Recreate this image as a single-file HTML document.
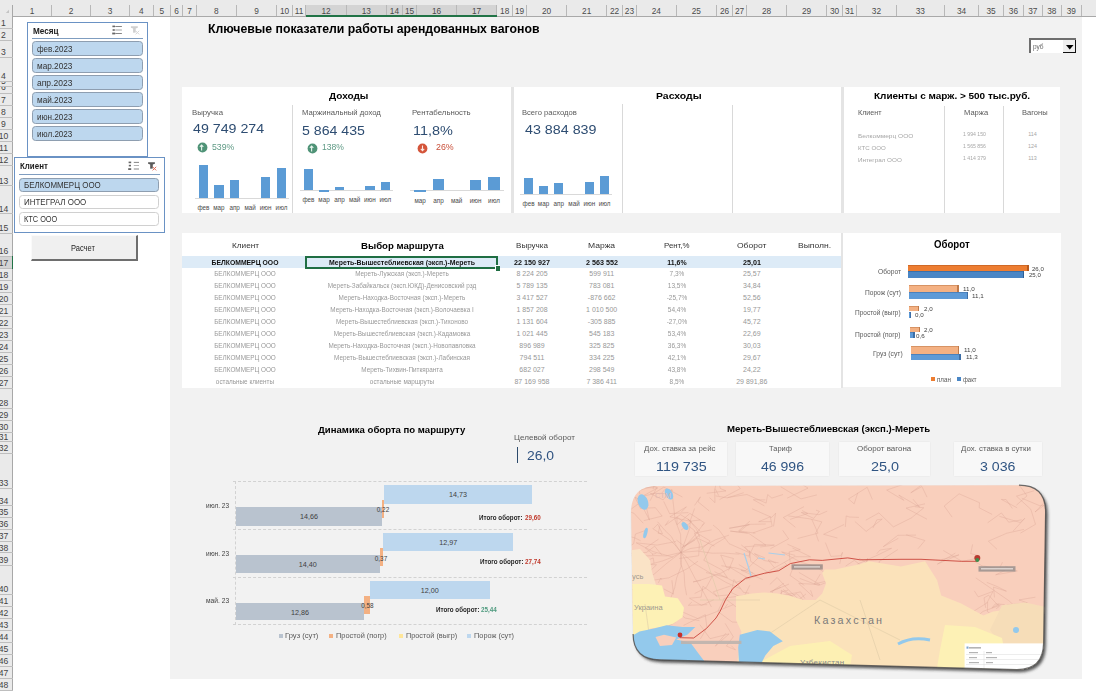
<!DOCTYPE html>
<html><head><meta charset="utf-8"><style>
html,body{margin:0;padding:0;}
body{width:1096px;height:691px;overflow:hidden;position:relative;font-family:"Liberation Sans", sans-serif;background:#fff;}
#r>div,#r>svg{position:absolute;white-space:pre;transform-origin:0 50%;}
</style></head><body><div id="r">
<div style="left:0.0px;top:0.0px;width:1096.0px;height:691.0px;background:#fff;"></div>
<div style="left:0.0px;top:0.0px;width:1096.0px;height:16.0px;background:#EAEAEA;"></div>
<div style="left:305.8px;top:4.5px;width:190.9px;height:11.5px;background:#D4D4D4;"></div>
<div style="left:51.0px;top:5.0px;width:1.0px;height:11.0px;background:#B8B8B8;"></div>
<div style="left:90.1px;top:5.0px;width:1.0px;height:11.0px;background:#B8B8B8;"></div>
<div style="left:129.1px;top:5.0px;width:1.0px;height:11.0px;background:#B8B8B8;"></div>
<div style="left:152.8px;top:5.0px;width:1.0px;height:11.0px;background:#B8B8B8;"></div>
<div style="left:170.0px;top:5.0px;width:1.0px;height:11.0px;background:#B8B8B8;"></div>
<div style="left:182.2px;top:5.0px;width:1.0px;height:11.0px;background:#B8B8B8;"></div>
<div style="left:195.9px;top:5.0px;width:1.0px;height:11.0px;background:#B8B8B8;"></div>
<div style="left:236.0px;top:5.0px;width:1.0px;height:11.0px;background:#B8B8B8;"></div>
<div style="left:276.1px;top:5.0px;width:1.0px;height:11.0px;background:#B8B8B8;"></div>
<div style="left:291.8px;top:5.0px;width:1.0px;height:11.0px;background:#B8B8B8;"></div>
<div style="left:305.3px;top:5.0px;width:1.0px;height:11.0px;background:#B8B8B8;"></div>
<div style="left:345.7px;top:5.0px;width:1.0px;height:11.0px;background:#B8B8B8;"></div>
<div style="left:385.9px;top:5.0px;width:1.0px;height:11.0px;background:#B8B8B8;"></div>
<div style="left:402.0px;top:5.0px;width:1.0px;height:11.0px;background:#B8B8B8;"></div>
<div style="left:416.0px;top:5.0px;width:1.0px;height:11.0px;background:#B8B8B8;"></div>
<div style="left:456.0px;top:5.0px;width:1.0px;height:11.0px;background:#B8B8B8;"></div>
<div style="left:496.2px;top:5.0px;width:1.0px;height:11.0px;background:#B8B8B8;"></div>
<div style="left:512.2px;top:5.0px;width:1.0px;height:11.0px;background:#B8B8B8;"></div>
<div style="left:526.0px;top:5.0px;width:1.0px;height:11.0px;background:#B8B8B8;"></div>
<div style="left:566.2px;top:5.0px;width:1.0px;height:11.0px;background:#B8B8B8;"></div>
<div style="left:606.2px;top:5.0px;width:1.0px;height:11.0px;background:#B8B8B8;"></div>
<div style="left:621.9px;top:5.0px;width:1.0px;height:11.0px;background:#B8B8B8;"></div>
<div style="left:635.9px;top:5.0px;width:1.0px;height:11.0px;background:#B8B8B8;"></div>
<div style="left:675.8px;top:5.0px;width:1.0px;height:11.0px;background:#B8B8B8;"></div>
<div style="left:715.9px;top:5.0px;width:1.0px;height:11.0px;background:#B8B8B8;"></div>
<div style="left:732.0px;top:5.0px;width:1.0px;height:11.0px;background:#B8B8B8;"></div>
<div style="left:746.0px;top:5.0px;width:1.0px;height:11.0px;background:#B8B8B8;"></div>
<div style="left:786.0px;top:5.0px;width:1.0px;height:11.0px;background:#B8B8B8;"></div>
<div style="left:826.2px;top:5.0px;width:1.0px;height:11.0px;background:#B8B8B8;"></div>
<div style="left:842.0px;top:5.0px;width:1.0px;height:11.0px;background:#B8B8B8;"></div>
<div style="left:856.0px;top:5.0px;width:1.0px;height:11.0px;background:#B8B8B8;"></div>
<div style="left:895.8px;top:5.0px;width:1.0px;height:11.0px;background:#B8B8B8;"></div>
<div style="left:943.9px;top:5.0px;width:1.0px;height:11.0px;background:#B8B8B8;"></div>
<div style="left:978.0px;top:5.0px;width:1.0px;height:11.0px;background:#B8B8B8;"></div>
<div style="left:1003.0px;top:5.0px;width:1.0px;height:11.0px;background:#B8B8B8;"></div>
<div style="left:1022.8px;top:5.0px;width:1.0px;height:11.0px;background:#B8B8B8;"></div>
<div style="left:1041.8px;top:5.0px;width:1.0px;height:11.0px;background:#B8B8B8;"></div>
<div style="left:1060.7px;top:5.0px;width:1.0px;height:11.0px;background:#B8B8B8;"></div>
<div style="left:1081.0px;top:5.0px;width:1.0px;height:11.0px;background:#B8B8B8;"></div>
<div style="left:0.0px;top:15.5px;width:1096.0px;height:1.0px;background:#A9A9A9;"></div>
<div style="left:305.8px;top:14.5px;width:190.9px;height:2.5px;background:#217346;"></div>
<svg style="position:absolute;left:0;top:0" width="13" height="16"><polygon points="9,9.8 9,13 5.8,13" fill="#C4C4C4"/></svg>
<div style="left:12.1px;top:6.3px;width:40.0px;text-align:center;font-size:8.3px;line-height:10.0px;color:#4A4A4A;">1</div>
<div style="left:51.0px;top:6.3px;width:40.0px;text-align:center;font-size:8.3px;line-height:10.0px;color:#4A4A4A;">2</div>
<div style="left:90.1px;top:6.3px;width:40.0px;text-align:center;font-size:8.3px;line-height:10.0px;color:#4A4A4A;">3</div>
<div style="left:121.4px;top:6.3px;width:40.0px;text-align:center;font-size:8.3px;line-height:10.0px;color:#4A4A4A;">4</div>
<div style="left:141.9px;top:6.3px;width:40.0px;text-align:center;font-size:8.3px;line-height:10.0px;color:#4A4A4A;">5</div>
<div style="left:156.6px;top:6.3px;width:40.0px;text-align:center;font-size:8.3px;line-height:10.0px;color:#4A4A4A;">6</div>
<div style="left:169.6px;top:6.3px;width:40.0px;text-align:center;font-size:8.3px;line-height:10.0px;color:#4A4A4A;">7</div>
<div style="left:196.4px;top:6.3px;width:40.0px;text-align:center;font-size:8.3px;line-height:10.0px;color:#4A4A4A;">8</div>
<div style="left:236.6px;top:6.3px;width:40.0px;text-align:center;font-size:8.3px;line-height:10.0px;color:#4A4A4A;">9</div>
<div style="left:264.5px;top:6.3px;width:40.0px;text-align:center;font-size:8.3px;line-height:10.0px;color:#4A4A4A;">10</div>
<div style="left:279.1px;top:6.3px;width:40.0px;text-align:center;font-size:8.3px;line-height:10.0px;color:#4A4A4A;">11</div>
<div style="left:306.0px;top:6.3px;width:40.0px;text-align:center;font-size:8.3px;line-height:10.0px;color:#4A4A4A;">12</div>
<div style="left:346.3px;top:6.3px;width:40.0px;text-align:center;font-size:8.3px;line-height:10.0px;color:#4A4A4A;">13</div>
<div style="left:374.4px;top:6.3px;width:40.0px;text-align:center;font-size:8.3px;line-height:10.0px;color:#4A4A4A;">14</div>
<div style="left:389.5px;top:6.3px;width:40.0px;text-align:center;font-size:8.3px;line-height:10.0px;color:#4A4A4A;">15</div>
<div style="left:416.5px;top:6.3px;width:40.0px;text-align:center;font-size:8.3px;line-height:10.0px;color:#4A4A4A;">16</div>
<div style="left:456.6px;top:6.3px;width:40.0px;text-align:center;font-size:8.3px;line-height:10.0px;color:#4A4A4A;">17</div>
<div style="left:484.7px;top:6.3px;width:40.0px;text-align:center;font-size:8.3px;line-height:10.0px;color:#4A4A4A;">18</div>
<div style="left:499.6px;top:6.3px;width:40.0px;text-align:center;font-size:8.3px;line-height:10.0px;color:#4A4A4A;">19</div>
<div style="left:526.6px;top:6.3px;width:40.0px;text-align:center;font-size:8.3px;line-height:10.0px;color:#4A4A4A;">20</div>
<div style="left:566.7px;top:6.3px;width:40.0px;text-align:center;font-size:8.3px;line-height:10.0px;color:#4A4A4A;">21</div>
<div style="left:594.5px;top:6.3px;width:40.0px;text-align:center;font-size:8.3px;line-height:10.0px;color:#4A4A4A;">22</div>
<div style="left:609.4px;top:6.3px;width:40.0px;text-align:center;font-size:8.3px;line-height:10.0px;color:#4A4A4A;">23</div>
<div style="left:636.3px;top:6.3px;width:40.0px;text-align:center;font-size:8.3px;line-height:10.0px;color:#4A4A4A;">24</div>
<div style="left:676.3px;top:6.3px;width:40.0px;text-align:center;font-size:8.3px;line-height:10.0px;color:#4A4A4A;">25</div>
<div style="left:704.5px;top:6.3px;width:40.0px;text-align:center;font-size:8.3px;line-height:10.0px;color:#4A4A4A;">26</div>
<div style="left:719.5px;top:6.3px;width:40.0px;text-align:center;font-size:8.3px;line-height:10.0px;color:#4A4A4A;">27</div>
<div style="left:746.5px;top:6.3px;width:40.0px;text-align:center;font-size:8.3px;line-height:10.0px;color:#4A4A4A;">28</div>
<div style="left:786.6px;top:6.3px;width:40.0px;text-align:center;font-size:8.3px;line-height:10.0px;color:#4A4A4A;">29</div>
<div style="left:814.6px;top:6.3px;width:40.0px;text-align:center;font-size:8.3px;line-height:10.0px;color:#4A4A4A;">30</div>
<div style="left:829.5px;top:6.3px;width:40.0px;text-align:center;font-size:8.3px;line-height:10.0px;color:#4A4A4A;">31</div>
<div style="left:856.4px;top:6.3px;width:40.0px;text-align:center;font-size:8.3px;line-height:10.0px;color:#4A4A4A;">32</div>
<div style="left:900.3px;top:6.3px;width:40.0px;text-align:center;font-size:8.3px;line-height:10.0px;color:#4A4A4A;">33</div>
<div style="left:941.5px;top:6.3px;width:40.0px;text-align:center;font-size:8.3px;line-height:10.0px;color:#4A4A4A;">34</div>
<div style="left:971.0px;top:6.3px;width:40.0px;text-align:center;font-size:8.3px;line-height:10.0px;color:#4A4A4A;">35</div>
<div style="left:993.4px;top:6.3px;width:40.0px;text-align:center;font-size:8.3px;line-height:10.0px;color:#4A4A4A;">36</div>
<div style="left:1012.8px;top:6.3px;width:40.0px;text-align:center;font-size:8.3px;line-height:10.0px;color:#4A4A4A;">37</div>
<div style="left:1031.8px;top:6.3px;width:40.0px;text-align:center;font-size:8.3px;line-height:10.0px;color:#4A4A4A;">38</div>
<div style="left:1051.3px;top:6.3px;width:40.0px;text-align:center;font-size:8.3px;line-height:10.0px;color:#4A4A4A;">39</div>
<div style="left:0.0px;top:16.0px;width:12.5px;height:675.0px;background:#EAEAEA;"></div>
<div style="left:12.0px;top:5.0px;width:1.2px;height:686.0px;background:#A8A8A8;"></div>
<div style="left:12.2px;top:256.0px;width:1.3px;height:12.6px;background:#217346;"></div>
<div style="left:0.0px;top:256.0px;width:12.0px;height:12.6px;background:#D4D4D4;"></div>
<div style="left:0.0px;top:28.0px;width:12.5px;height:1.0px;background:#BEBEBE;"></div>
<div style="left:-16.5px;top:17.8px;width:40.0px;text-align:center;font-size:8.6px;line-height:10.3px;color:#444;">1</div>
<div style="left:0.0px;top:39.9px;width:12.5px;height:1.0px;background:#BEBEBE;"></div>
<div style="left:-16.5px;top:30.0px;width:40.0px;text-align:center;font-size:8.6px;line-height:10.3px;color:#444;">2</div>
<div style="left:0.0px;top:56.5px;width:12.5px;height:1.0px;background:#BEBEBE;"></div>
<div style="left:-16.5px;top:46.9px;width:40.0px;text-align:center;font-size:8.6px;line-height:10.3px;color:#444;">3</div>
<div style="left:0.0px;top:80.7px;width:12.5px;height:1.0px;background:#BEBEBE;"></div>
<div style="left:-16.5px;top:71.1px;width:40.0px;text-align:center;font-size:8.6px;line-height:10.3px;color:#444;">4</div>
<div style="left:0.0px;top:86.3px;width:12.5px;height:1.0px;background:#BEBEBE;"></div>
<div style="left:0;top:81.7px;width:12px;height:4.6px;overflow:hidden;"><div style="position:absolute;left:-16.5px;width:40px;top:-5.9px;text-align:center;font-size:8.6px;line-height:10px;color:#444;">5</div></div>
<div style="left:0.0px;top:92.5px;width:12.5px;height:1.0px;background:#BEBEBE;"></div>
<div style="left:0;top:87.3px;width:12px;height:5.2px;overflow:hidden;"><div style="position:absolute;left:-16.5px;width:40px;top:-5.3px;text-align:center;font-size:8.6px;line-height:10px;color:#444;">6</div></div>
<div style="left:0.0px;top:104.7px;width:12.5px;height:1.0px;background:#BEBEBE;"></div>
<div style="left:-16.5px;top:94.6px;width:40.0px;text-align:center;font-size:8.6px;line-height:10.3px;color:#444;">7</div>
<div style="left:0.0px;top:116.8px;width:12.5px;height:1.0px;background:#BEBEBE;"></div>
<div style="left:-16.5px;top:106.8px;width:40.0px;text-align:center;font-size:8.6px;line-height:10.3px;color:#444;">8</div>
<div style="left:0.0px;top:128.8px;width:12.5px;height:1.0px;background:#BEBEBE;"></div>
<div style="left:-16.5px;top:118.8px;width:40.0px;text-align:center;font-size:8.6px;line-height:10.3px;color:#444;">9</div>
<div style="left:0.0px;top:141.3px;width:12.5px;height:1.0px;background:#BEBEBE;"></div>
<div style="left:-16.5px;top:131.1px;width:40.0px;text-align:center;font-size:8.6px;line-height:10.3px;color:#444;">10</div>
<div style="left:0.0px;top:153.2px;width:12.5px;height:1.0px;background:#BEBEBE;"></div>
<div style="left:-16.5px;top:143.3px;width:40.0px;text-align:center;font-size:8.6px;line-height:10.3px;color:#444;">11</div>
<div style="left:0.0px;top:164.8px;width:12.5px;height:1.0px;background:#BEBEBE;"></div>
<div style="left:-16.5px;top:155.0px;width:40.0px;text-align:center;font-size:8.6px;line-height:10.3px;color:#444;">12</div>
<div style="left:0.0px;top:185.3px;width:12.5px;height:1.0px;background:#BEBEBE;"></div>
<div style="left:-16.5px;top:175.7px;width:40.0px;text-align:center;font-size:8.6px;line-height:10.3px;color:#444;">13</div>
<div style="left:0.0px;top:213.1px;width:12.5px;height:1.0px;background:#BEBEBE;"></div>
<div style="left:-16.5px;top:203.5px;width:40.0px;text-align:center;font-size:8.6px;line-height:10.3px;color:#444;">14</div>
<div style="left:0.0px;top:233.0px;width:12.5px;height:1.0px;background:#BEBEBE;"></div>
<div style="left:-16.5px;top:223.4px;width:40.0px;text-align:center;font-size:8.6px;line-height:10.3px;color:#444;">15</div>
<div style="left:0.0px;top:255.5px;width:12.5px;height:1.0px;background:#BEBEBE;"></div>
<div style="left:-16.5px;top:245.9px;width:40.0px;text-align:center;font-size:8.6px;line-height:10.3px;color:#444;">16</div>
<div style="left:0.0px;top:268.1px;width:12.5px;height:1.0px;background:#BEBEBE;"></div>
<div style="left:-16.5px;top:257.8px;width:40.0px;text-align:center;font-size:8.6px;line-height:10.3px;color:#444;">17</div>
<div style="left:0.0px;top:280.2px;width:12.5px;height:1.0px;background:#BEBEBE;"></div>
<div style="left:-16.5px;top:270.2px;width:40.0px;text-align:center;font-size:8.6px;line-height:10.3px;color:#444;">18</div>
<div style="left:0.0px;top:292.0px;width:12.5px;height:1.0px;background:#BEBEBE;"></div>
<div style="left:-16.5px;top:282.1px;width:40.0px;text-align:center;font-size:8.6px;line-height:10.3px;color:#444;">19</div>
<div style="left:0.0px;top:303.8px;width:12.5px;height:1.0px;background:#BEBEBE;"></div>
<div style="left:-16.5px;top:293.9px;width:40.0px;text-align:center;font-size:8.6px;line-height:10.3px;color:#444;">20</div>
<div style="left:0.0px;top:315.8px;width:12.5px;height:1.0px;background:#BEBEBE;"></div>
<div style="left:-16.5px;top:305.8px;width:40.0px;text-align:center;font-size:8.6px;line-height:10.3px;color:#444;">21</div>
<div style="left:0.0px;top:327.6px;width:12.5px;height:1.0px;background:#BEBEBE;"></div>
<div style="left:-16.5px;top:317.7px;width:40.0px;text-align:center;font-size:8.6px;line-height:10.3px;color:#444;">22</div>
<div style="left:0.0px;top:339.8px;width:12.5px;height:1.0px;background:#BEBEBE;"></div>
<div style="left:-16.5px;top:329.7px;width:40.0px;text-align:center;font-size:8.6px;line-height:10.3px;color:#444;">23</div>
<div style="left:0.0px;top:351.9px;width:12.5px;height:1.0px;background:#BEBEBE;"></div>
<div style="left:-16.5px;top:341.9px;width:40.0px;text-align:center;font-size:8.6px;line-height:10.3px;color:#444;">24</div>
<div style="left:0.0px;top:363.7px;width:12.5px;height:1.0px;background:#BEBEBE;"></div>
<div style="left:-16.5px;top:353.8px;width:40.0px;text-align:center;font-size:8.6px;line-height:10.3px;color:#444;">25</div>
<div style="left:0.0px;top:375.7px;width:12.5px;height:1.0px;background:#BEBEBE;"></div>
<div style="left:-16.5px;top:365.7px;width:40.0px;text-align:center;font-size:8.6px;line-height:10.3px;color:#444;">26</div>
<div style="left:0.0px;top:387.5px;width:12.5px;height:1.0px;background:#BEBEBE;"></div>
<div style="left:-16.5px;top:377.6px;width:40.0px;text-align:center;font-size:8.6px;line-height:10.3px;color:#444;">27</div>
<div style="left:0.0px;top:408.0px;width:12.5px;height:1.0px;background:#BEBEBE;"></div>
<div style="left:-16.5px;top:398.4px;width:40.0px;text-align:center;font-size:8.6px;line-height:10.3px;color:#444;">28</div>
<div style="left:0.0px;top:419.9px;width:12.5px;height:1.0px;background:#BEBEBE;"></div>
<div style="left:-16.5px;top:410.0px;width:40.0px;text-align:center;font-size:8.6px;line-height:10.3px;color:#444;">29</div>
<div style="left:0.0px;top:431.5px;width:12.5px;height:1.0px;background:#BEBEBE;"></div>
<div style="left:-16.5px;top:421.7px;width:40.0px;text-align:center;font-size:8.6px;line-height:10.3px;color:#444;">30</div>
<div style="left:0.0px;top:441.3px;width:12.5px;height:1.0px;background:#BEBEBE;"></div>
<div style="left:-16.5px;top:432.4px;width:40.0px;text-align:center;font-size:8.6px;line-height:10.3px;color:#444;">31</div>
<div style="left:0.0px;top:453.0px;width:12.5px;height:1.0px;background:#BEBEBE;"></div>
<div style="left:-16.5px;top:443.2px;width:40.0px;text-align:center;font-size:8.6px;line-height:10.3px;color:#444;">32</div>
<div style="left:0.0px;top:487.8px;width:12.5px;height:1.0px;background:#BEBEBE;"></div>
<div style="left:-16.5px;top:478.2px;width:40.0px;text-align:center;font-size:8.6px;line-height:10.3px;color:#444;">33</div>
<div style="left:0.0px;top:505.1px;width:12.5px;height:1.0px;background:#BEBEBE;"></div>
<div style="left:-16.5px;top:495.5px;width:40.0px;text-align:center;font-size:8.6px;line-height:10.3px;color:#444;">34</div>
<div style="left:0.0px;top:516.8px;width:12.5px;height:1.0px;background:#BEBEBE;"></div>
<div style="left:-16.5px;top:507.0px;width:40.0px;text-align:center;font-size:8.6px;line-height:10.3px;color:#444;">35</div>
<div style="left:0.0px;top:528.9px;width:12.5px;height:1.0px;background:#BEBEBE;"></div>
<div style="left:-16.5px;top:518.9px;width:40.0px;text-align:center;font-size:8.6px;line-height:10.3px;color:#444;">36</div>
<div style="left:0.0px;top:540.5px;width:12.5px;height:1.0px;background:#BEBEBE;"></div>
<div style="left:-16.5px;top:530.7px;width:40.0px;text-align:center;font-size:8.6px;line-height:10.3px;color:#444;">37</div>
<div style="left:0.0px;top:552.4px;width:12.5px;height:1.0px;background:#BEBEBE;"></div>
<div style="left:-16.5px;top:542.5px;width:40.0px;text-align:center;font-size:8.6px;line-height:10.3px;color:#444;">38</div>
<div style="left:0.0px;top:564.5px;width:12.5px;height:1.0px;background:#BEBEBE;"></div>
<div style="left:-16.5px;top:554.5px;width:40.0px;text-align:center;font-size:8.6px;line-height:10.3px;color:#444;">39</div>
<div style="left:0.0px;top:594.0px;width:12.5px;height:1.0px;background:#BEBEBE;"></div>
<div style="left:-16.5px;top:584.4px;width:40.0px;text-align:center;font-size:8.6px;line-height:10.3px;color:#444;">40</div>
<div style="left:0.0px;top:605.6px;width:12.5px;height:1.0px;background:#BEBEBE;"></div>
<div style="left:-16.5px;top:595.8px;width:40.0px;text-align:center;font-size:8.6px;line-height:10.3px;color:#444;">41</div>
<div style="left:0.0px;top:617.5px;width:12.5px;height:1.0px;background:#BEBEBE;"></div>
<div style="left:-16.5px;top:607.6px;width:40.0px;text-align:center;font-size:8.6px;line-height:10.3px;color:#444;">42</div>
<div style="left:0.0px;top:629.5px;width:12.5px;height:1.0px;background:#BEBEBE;"></div>
<div style="left:-16.5px;top:619.5px;width:40.0px;text-align:center;font-size:8.6px;line-height:10.3px;color:#444;">43</div>
<div style="left:0.0px;top:641.8px;width:12.5px;height:1.0px;background:#BEBEBE;"></div>
<div style="left:-16.5px;top:631.7px;width:40.0px;text-align:center;font-size:8.6px;line-height:10.3px;color:#444;">44</div>
<div style="left:0.0px;top:653.9px;width:12.5px;height:1.0px;background:#BEBEBE;"></div>
<div style="left:-16.5px;top:643.9px;width:40.0px;text-align:center;font-size:8.6px;line-height:10.3px;color:#444;">45</div>
<div style="left:0.0px;top:665.9px;width:12.5px;height:1.0px;background:#BEBEBE;"></div>
<div style="left:-16.5px;top:655.9px;width:40.0px;text-align:center;font-size:8.6px;line-height:10.3px;color:#444;">46</div>
<div style="left:0.0px;top:678.0px;width:12.5px;height:1.0px;background:#BEBEBE;"></div>
<div style="left:-16.5px;top:668.0px;width:40.0px;text-align:center;font-size:8.6px;line-height:10.3px;color:#444;">47</div>
<div style="left:0.0px;top:690.0px;width:12.5px;height:1.0px;background:#BEBEBE;"></div>
<div style="left:-16.5px;top:680.0px;width:40.0px;text-align:center;font-size:8.6px;line-height:10.3px;color:#444;">48</div>
<div style="left:12.2px;top:256.0px;width:1.3px;height:12.6px;background:#217346;"></div>
<div style="left:170.0px;top:16.5px;width:912.0px;height:662.0px;background:#F2F2F2;"></div>
<div style="left:27.0px;top:22.0px;width:121.0px;height:135.0px;background:#fff;border:1px solid #6A92C4;box-sizing:border-box;"></div>
<div style="left:32.5px;top:26.3px;font-size:8.5px;line-height:10.2px;color:#1a1a1a;font-weight:bold;transform:scaleX(0.958);">Месяц</div>
<div style="left:32.0px;top:37.6px;width:111.0px;height:1.2px;background:#7F9DC0;"></div>
<svg style="left:110px;top:23px" width="16" height="14" viewBox="110 23 16 14"><g stroke="#777" stroke-width="0.9"><path d="M115.3,26.5h6.6M115.3,33.5h6.6"/><path d="M115.3,30h6.6" stroke="#999"/></g><g fill="#666"><rect x="112.4" y="25.6" width="2.6" height="1.6"/><rect x="112.6" y="29.2" width="2.2" height="1.6"/><rect x="112.2" y="32.6" width="3" height="1.8"/></g></svg>
<svg style="left:130px;top:24px" width="12" height="12" viewBox="130 24 12 12"><path d="M130.9,26.2h6.9v1.6l-2.1,0.6v4.1l-2.6,0.2v-4.3l-2.2-0.6z" fill="#cfcfcf"/><path d="M135.6,30.8l3.6,3.6M139.2,30.8l-3.6,3.6" stroke="#d8d8d8" stroke-width="1"/></svg>
<div style="left:32.1px;top:41.3px;width:110.8px;height:14.4px;background:#BDD7EE;border:1px solid #8E9EB0;border-radius:3.5px;box-sizing:border-box;"></div>
<div style="left:37.0px;top:44.5px;font-size:8.2px;line-height:9.8px;color:#333;transform:scaleX(0.980);">фев.2023</div>
<div style="left:32.1px;top:58.3px;width:110.8px;height:14.4px;background:#BDD7EE;border:1px solid #8E9EB0;border-radius:3.5px;box-sizing:border-box;"></div>
<div style="left:37.0px;top:61.5px;font-size:8.2px;line-height:9.8px;color:#333;transform:scaleX(1.005);">мар.2023</div>
<div style="left:32.1px;top:75.3px;width:110.8px;height:14.4px;background:#BDD7EE;border:1px solid #8E9EB0;border-radius:3.5px;box-sizing:border-box;"></div>
<div style="left:37.0px;top:78.5px;font-size:8.2px;line-height:9.8px;color:#333;transform:scaleX(1.040);">апр.2023</div>
<div style="left:32.1px;top:92.3px;width:110.8px;height:14.4px;background:#BDD7EE;border:1px solid #8E9EB0;border-radius:3.5px;box-sizing:border-box;"></div>
<div style="left:37.0px;top:95.5px;font-size:8.2px;line-height:9.8px;color:#333;transform:scaleX(1.004);">май.2023</div>
<div style="left:32.1px;top:109.3px;width:110.8px;height:14.4px;background:#BDD7EE;border:1px solid #8E9EB0;border-radius:3.5px;box-sizing:border-box;"></div>
<div style="left:37.0px;top:112.5px;font-size:8.2px;line-height:9.8px;color:#333;transform:scaleX(0.991);">июн.2023</div>
<div style="left:32.1px;top:126.3px;width:110.8px;height:14.4px;background:#BDD7EE;border:1px solid #8E9EB0;border-radius:3.5px;box-sizing:border-box;"></div>
<div style="left:37.0px;top:129.5px;font-size:8.2px;line-height:9.8px;color:#333;transform:scaleX(0.988);">июл.2023</div>
<div style="left:14.0px;top:157.0px;width:151.0px;height:76.0px;background:#fff;border:1px solid #6A92C4;box-sizing:border-box;"></div>
<div style="left:19.7px;top:161.2px;font-size:8.5px;line-height:10.2px;color:#1a1a1a;font-weight:bold;transform:scaleX(0.932);">Клиент</div>
<div style="left:19.0px;top:173.9px;width:141.0px;height:1.2px;background:#7F9DC0;"></div>
<svg style="left:126px;top:159px" width="16" height="14" viewBox="126 159 16 14"><g stroke="#777" stroke-width="0.9"><path d="M133.8,162.4h5.2M133.8,169h5.2"/><path d="M133.8,165.5h5.2" stroke="#aaa"/></g><g fill="#666"><rect x="128.6" y="161.6" width="2.6" height="1.6"/><rect x="128.8" y="164.8" width="2.2" height="1.6"/><rect x="128.2" y="168.2" width="3" height="1.8"/></g></svg>
<svg style="left:146px;top:160px" width="12" height="12" viewBox="146 160 12 12"><path d="M148.1,162.2h6.8v1.6l-2.1,0.6v4.1l-2.6,0.2v-4.3l-2.1-0.6z" fill="#5a5a5a"/><path d="M152.6,166.8l3.6,3.6M156.2,166.8l-3.6,3.6" stroke="#E36A55" stroke-width="1"/></svg>
<div style="left:19.2px;top:177.5px;width:139.5px;height:14.2px;background:#BDD7EE;border:1px solid #8E9EB0;border-radius:3.5px;box-sizing:border-box;"></div>
<div style="left:24.2px;top:180.6px;font-size:8.2px;line-height:9.8px;color:#333;transform:scaleX(0.968);">БЕЛКОММЕРЦ ООО</div>
<div style="left:19.2px;top:194.6px;width:139.5px;height:14.2px;background:#fff;border:1px solid #D0D0D0;border-radius:3.5px;box-sizing:border-box;"></div>
<div style="left:24.2px;top:197.7px;font-size:8.2px;line-height:9.8px;color:#333;transform:scaleX(0.973);">ИНТЕГРАЛ ООО</div>
<div style="left:19.2px;top:211.6px;width:139.5px;height:14.2px;background:#fff;border:1px solid #D0D0D0;border-radius:3.5px;box-sizing:border-box;"></div>
<div style="left:24.2px;top:214.7px;font-size:8.2px;line-height:9.8px;color:#333;transform:scaleX(0.898);">КТС ООО</div>
<div style="left:30.5px;top:235.2px;width:107.2px;height:25.5px;background:#F0F0F0;border-right:2px solid #6E6E6E;border-bottom:2px solid #6E6E6E;border-top:1px solid #fafafa;border-left:1px solid #fafafa;box-sizing:border-box;"></div>
<div style="left:71.3px;top:243.0px;font-size:8.5px;line-height:10.2px;color:#222;transform:scaleX(0.884);">Расчет</div>
<div style="left:207.9px;top:21.9px;font-size:12.4px;line-height:14.9px;color:#000;font-weight:bold;transform:scaleX(0.990);">Ключевые показатели работы арендованных вагонов</div>
<div style="left:1029.3px;top:38.3px;width:47.2px;height:15.0px;background:#fff;border-top:2px solid #6E6E6E;border-left:2px solid #6E6E6E;box-sizing:border-box;"></div>
<div style="left:1063.0px;top:40.2px;width:13.0px;height:13.1px;background:#EFEFEF;border-right:1.5px solid #111;border-bottom:1.5px solid #111;box-sizing:border-box;"></div>
<svg style="left:1065.5px;top:44.5px" width="8" height="5"><polygon points="0,0 7.5,0 3.75,4.5" fill="#000"/></svg>
<div style="left:1033.0px;top:43.1px;font-size:7px;line-height:8.4px;color:#666;transform:scaleX(0.929);">руб</div>
<div style="left:181.7px;top:87.0px;width:329.1px;height:126.2px;background:#fff;"></div>
<div style="left:510.8px;top:87.0px;width:3.0px;height:126.2px;background:#E4E4E4;"></div>
<div style="left:513.8px;top:87.0px;width:327.4px;height:126.2px;background:#fff;"></div>
<div style="left:841.2px;top:87.0px;width:2.6px;height:126.2px;background:#E4E4E4;"></div>
<div style="left:843.8px;top:87.0px;width:216.7px;height:126.2px;background:#fff;"></div>
<div style="left:292.1px;top:104.6px;width:1.0px;height:108.6px;background:#D9D9D9;"></div>
<div style="left:622.1px;top:104.2px;width:1.0px;height:109.0px;background:#D9D9D9;"></div>
<div style="left:732.3px;top:105.2px;width:1.0px;height:108.0px;background:#D9D9D9;"></div>
<div style="left:944.0px;top:105.6px;width:1.0px;height:107.6px;background:#D9D9D9;"></div>
<div style="left:1003.1px;top:105.6px;width:1.0px;height:107.6px;background:#D9D9D9;"></div>
<div style="left:328.9px;top:91.0px;font-size:9.2px;line-height:11.0px;color:#000;font-weight:bold;transform:scaleX(1.092);">Доходы</div>
<div style="left:656.1px;top:91.0px;font-size:9.2px;line-height:11.0px;color:#000;font-weight:bold;transform:scaleX(1.136);">Расходы</div>
<div style="left:874.4px;top:91.0px;font-size:9.2px;line-height:11.0px;color:#000;font-weight:bold;transform:scaleX(1.085);">Клиенты с марж. &gt; 500 тыс.руб.</div>
<div style="left:192.3px;top:109.0px;font-size:7.2px;line-height:8.6px;color:#595959;transform:scaleX(1.087);">Выручка</div>
<div style="left:301.8px;top:109.0px;font-size:7.2px;line-height:8.6px;color:#595959;transform:scaleX(1.071);">Маржинальный доход</div>
<div style="left:412.2px;top:109.0px;font-size:7.2px;line-height:8.6px;color:#595959;transform:scaleX(1.087);">Рентабельность</div>
<div style="left:522.2px;top:109.0px;font-size:7.2px;line-height:8.6px;color:#595959;transform:scaleX(1.056);">Всего расходов</div>
<div style="left:193.2px;top:120.6px;font-size:13.6px;line-height:16.3px;color:#2E4D72;transform:scaleX(1.046);">49 749 274</div>
<div style="left:301.8px;top:122.6px;font-size:13.6px;line-height:16.3px;color:#2E4D72;transform:scaleX(1.040);">5 864 435</div>
<div style="left:413.2px;top:122.5px;font-size:13.6px;line-height:16.3px;color:#2E4D72;transform:scaleX(1.063);">11,8%</div>
<div style="left:524.7px;top:121.8px;font-size:13.6px;line-height:16.3px;color:#2E4D72;transform:scaleX(1.051);">43 884 839</div>
<svg style="left:197.3px;top:142.4px" width="11" height="11" viewBox="0 0 11 11"><circle cx="5.5" cy="5.5" r="4.9" fill="#4F9377"/><path d="M4.6 8.6V3.2M2.9 4.9l1.7-1.9 1.7 1.9" stroke="#E8F5EE" stroke-width="1.1" fill="none"/></svg>
<svg style="left:307.2px;top:142.5px" width="11" height="11" viewBox="0 0 11 11"><circle cx="5.5" cy="5.5" r="4.9" fill="#4F9377"/><path d="M4.6 8.6V3.2M2.9 4.9l1.7-1.9 1.7 1.9" stroke="#E8F5EE" stroke-width="1.1" fill="none"/></svg>
<svg style="left:417.2px;top:142.5px" width="11" height="11" viewBox="0 0 11 11"><circle cx="5.5" cy="5.5" r="4.9" fill="#D4553A"/><path d="M5.5 2.4V7.6M3.8 5.9l1.7 1.9 1.7-1.9" stroke="#FBE9E4" stroke-width="1.1" fill="none"/></svg>
<div style="left:211.5px;top:141.2px;font-size:9.8px;line-height:11.8px;color:#5F9A85;transform:scaleX(0.894);">539%</div>
<div style="left:321.5px;top:141.2px;font-size:9.8px;line-height:11.8px;color:#5F9A85;transform:scaleX(0.874);">138%</div>
<div style="left:436.0px;top:141.2px;font-size:9.8px;line-height:11.8px;color:#C9503A;transform:scaleX(0.903);">26%</div>
<div style="left:195.3px;top:197.6px;width:94.2px;height:1.1px;background:#D9D9D9;"></div>
<div style="left:198.9px;top:165.1px;width:8.9px;height:33.0px;background:#5B9BD5;"></div>
<div style="left:214.1px;top:185.0px;width:9.5px;height:13.1px;background:#5B9BD5;"></div>
<div style="left:230.1px;top:179.9px;width:8.9px;height:18.2px;background:#5B9BD5;"></div>
<div style="left:261.1px;top:176.9px;width:8.7px;height:21.2px;background:#5B9BD5;"></div>
<div style="left:276.9px;top:168.0px;width:9.1px;height:30.1px;background:#5B9BD5;"></div>
<div style="left:-96.6px;top:204.3px;width:600px;text-align:center;font-size:6.3px;line-height:7.6px;color:#4A4A4A;transform:scaleX(1.000);transform-origin:50% 50%;">фев</div>
<div style="left:-81.1px;top:204.3px;width:600px;text-align:center;font-size:6.3px;line-height:7.6px;color:#4A4A4A;transform:scaleX(1.000);transform-origin:50% 50%;">мар</div>
<div style="left:-65.4px;top:204.3px;width:600px;text-align:center;font-size:6.3px;line-height:7.6px;color:#4A4A4A;transform:scaleX(1.000);transform-origin:50% 50%;">апр</div>
<div style="left:-49.8px;top:204.3px;width:600px;text-align:center;font-size:6.3px;line-height:7.6px;color:#4A4A4A;transform:scaleX(1.000);transform-origin:50% 50%;">май</div>
<div style="left:-34.5px;top:204.3px;width:600px;text-align:center;font-size:6.3px;line-height:7.6px;color:#4A4A4A;transform:scaleX(1.000);transform-origin:50% 50%;">июн</div>
<div style="left:-18.5px;top:204.3px;width:600px;text-align:center;font-size:6.3px;line-height:7.6px;color:#4A4A4A;transform:scaleX(1.000);transform-origin:50% 50%;">июл</div>
<div style="left:300.0px;top:189.5px;width:93.3px;height:1.1px;background:#D9D9D9;"></div>
<div style="left:303.8px;top:168.8px;width:9.1px;height:21.2px;background:#5B9BD5;"></div>
<div style="left:319.0px;top:190.0px;width:9.9px;height:1.6px;background:#5B9BD5;"></div>
<div style="left:335.0px;top:186.8px;width:8.9px;height:3.2px;background:#5B9BD5;"></div>
<div style="left:365.0px;top:185.8px;width:9.7px;height:4.2px;background:#5B9BD5;"></div>
<div style="left:380.8px;top:182.0px;width:9.1px;height:8.0px;background:#5B9BD5;"></div>
<div style="left:8.4px;top:196.3px;width:600px;text-align:center;font-size:6.3px;line-height:7.6px;color:#4A4A4A;transform:scaleX(1.000);transform-origin:50% 50%;">фев</div>
<div style="left:24.0px;top:196.3px;width:600px;text-align:center;font-size:6.3px;line-height:7.6px;color:#4A4A4A;transform:scaleX(1.000);transform-origin:50% 50%;">мар</div>
<div style="left:39.5px;top:196.3px;width:600px;text-align:center;font-size:6.3px;line-height:7.6px;color:#4A4A4A;transform:scaleX(1.000);transform-origin:50% 50%;">апр</div>
<div style="left:54.7px;top:196.3px;width:600px;text-align:center;font-size:6.3px;line-height:7.6px;color:#4A4A4A;transform:scaleX(1.000);transform-origin:50% 50%;">май</div>
<div style="left:69.9px;top:196.3px;width:600px;text-align:center;font-size:6.3px;line-height:7.6px;color:#4A4A4A;transform:scaleX(1.000);transform-origin:50% 50%;">июн</div>
<div style="left:85.4px;top:196.3px;width:600px;text-align:center;font-size:6.3px;line-height:7.6px;color:#4A4A4A;transform:scaleX(1.000);transform-origin:50% 50%;">июл</div>
<div style="left:410.0px;top:189.9px;width:93.7px;height:1.1px;background:#D9D9D9;"></div>
<div style="left:414.2px;top:190.4px;width:11.8px;height:1.2px;background:#5B9BD5;"></div>
<div style="left:433.0px;top:178.9px;width:11.0px;height:11.5px;background:#5B9BD5;"></div>
<div style="left:469.9px;top:179.9px;width:11.1px;height:10.5px;background:#5B9BD5;"></div>
<div style="left:488.0px;top:176.9px;width:11.9px;height:13.5px;background:#5B9BD5;"></div>
<div style="left:120.1px;top:196.5px;width:600px;text-align:center;font-size:6.3px;line-height:7.6px;color:#4A4A4A;transform:scaleX(1.000);transform-origin:50% 50%;">мар</div>
<div style="left:138.5px;top:196.5px;width:600px;text-align:center;font-size:6.3px;line-height:7.6px;color:#4A4A4A;transform:scaleX(1.000);transform-origin:50% 50%;">апр</div>
<div style="left:156.7px;top:196.5px;width:600px;text-align:center;font-size:6.3px;line-height:7.6px;color:#4A4A4A;transform:scaleX(1.000);transform-origin:50% 50%;">май</div>
<div style="left:175.5px;top:196.5px;width:600px;text-align:center;font-size:6.3px;line-height:7.6px;color:#4A4A4A;transform:scaleX(1.000);transform-origin:50% 50%;">июн</div>
<div style="left:194.0px;top:196.5px;width:600px;text-align:center;font-size:6.3px;line-height:7.6px;color:#4A4A4A;transform:scaleX(1.000);transform-origin:50% 50%;">июл</div>
<div style="left:520.2px;top:193.6px;width:92.2px;height:1.1px;background:#D9D9D9;"></div>
<div style="left:524.2px;top:178.3px;width:8.8px;height:15.8px;background:#5B9BD5;"></div>
<div style="left:539.0px;top:186.0px;width:9.0px;height:8.1px;background:#5B9BD5;"></div>
<div style="left:554.2px;top:183.0px;width:9.0px;height:11.1px;background:#5B9BD5;"></div>
<div style="left:585.0px;top:182.0px;width:8.8px;height:12.1px;background:#5B9BD5;"></div>
<div style="left:600.2px;top:175.8px;width:8.8px;height:18.3px;background:#5B9BD5;"></div>
<div style="left:228.6px;top:199.9px;width:600px;text-align:center;font-size:6.3px;line-height:7.6px;color:#4A4A4A;transform:scaleX(1.000);transform-origin:50% 50%;">фев</div>
<div style="left:243.5px;top:199.9px;width:600px;text-align:center;font-size:6.3px;line-height:7.6px;color:#4A4A4A;transform:scaleX(1.000);transform-origin:50% 50%;">мар</div>
<div style="left:258.7px;top:199.9px;width:600px;text-align:center;font-size:6.3px;line-height:7.6px;color:#4A4A4A;transform:scaleX(1.000);transform-origin:50% 50%;">апр</div>
<div style="left:274.0px;top:199.9px;width:600px;text-align:center;font-size:6.3px;line-height:7.6px;color:#4A4A4A;transform:scaleX(1.000);transform-origin:50% 50%;">май</div>
<div style="left:289.4px;top:199.9px;width:600px;text-align:center;font-size:6.3px;line-height:7.6px;color:#4A4A4A;transform:scaleX(1.000);transform-origin:50% 50%;">июн</div>
<div style="left:304.6px;top:199.9px;width:600px;text-align:center;font-size:6.3px;line-height:7.6px;color:#4A4A4A;transform:scaleX(1.000);transform-origin:50% 50%;">июл</div>
<div style="left:858.0px;top:108.7px;font-size:7.4px;line-height:8.9px;color:#595959;transform:scaleX(0.966);">Клиент</div>
<div style="left:964.2px;top:108.7px;font-size:7.4px;line-height:8.9px;color:#595959;transform:scaleX(1.025);">Маржа</div>
<div style="left:1022.2px;top:108.7px;font-size:7.4px;line-height:8.9px;color:#595959;transform:scaleX(1.021);">Вагоны</div>
<div style="left:858.0px;top:132.7px;font-size:5.6px;line-height:6.7px;color:#A6A6A6;transform:scaleX(1.173);">Белкоммерц ООО</div>
<div style="left:858.0px;top:144.7px;font-size:5.6px;line-height:6.7px;color:#A6A6A6;transform:scaleX(1.098);">КТС ООО</div>
<div style="left:858.0px;top:156.8px;font-size:5.6px;line-height:6.7px;color:#A6A6A6;transform:scaleX(1.127);">Интеграл ООО</div>
<div style="left:963.0px;top:131.1px;font-size:5.4px;line-height:6.5px;color:#A6A6A6;transform:scaleX(0.959);">1 994 150</div>
<div style="left:963.0px;top:143.2px;font-size:5.4px;line-height:6.5px;color:#A6A6A6;transform:scaleX(0.959);">1 565 856</div>
<div style="left:963.0px;top:155.2px;font-size:5.4px;line-height:6.5px;color:#A6A6A6;transform:scaleX(0.959);">1 414 379</div>
<div style="left:732.5px;top:131.1px;width:600px;text-align:center;font-size:5.4px;line-height:6.5px;color:#A6A6A6;transform:scaleX(1.000);transform-origin:50% 50%;">114</div>
<div style="left:732.5px;top:143.2px;width:600px;text-align:center;font-size:5.4px;line-height:6.5px;color:#A6A6A6;transform:scaleX(1.000);transform-origin:50% 50%;">124</div>
<div style="left:732.5px;top:155.2px;width:600px;text-align:center;font-size:5.4px;line-height:6.5px;color:#A6A6A6;transform:scaleX(1.000);transform-origin:50% 50%;">113</div>
<div style="left:182.0px;top:233.0px;width:659.2px;height:155.0px;background:#fff;"></div>
<div style="left:841.2px;top:233.0px;width:1.4px;height:155.0px;background:#E4E4E4;"></div>
<div style="left:182.0px;top:256.4px;width:659.2px;height:11.4px;background:#DDEBF7;"></div>
<div style="left:231.6px;top:241.1px;font-size:8px;line-height:9.6px;color:#333333;transform:scaleX(1.026);">Клиент</div>
<div style="left:360.7px;top:239.6px;font-size:9.5px;line-height:11.4px;color:#000;font-weight:bold;transform:scaleX(1.011);">Выбор маршрута</div>
<div style="left:516.3px;top:241.1px;font-size:8px;line-height:9.6px;color:#333333;transform:scaleX(1.008);">Выручка</div>
<div style="left:588.3px;top:241.1px;font-size:8px;line-height:9.6px;color:#333333;transform:scaleX(1.065);">Маржа</div>
<div style="left:664.0px;top:241.1px;font-size:8px;line-height:9.6px;color:#333333;transform:scaleX(0.982);">Рент,%</div>
<div style="left:737.1px;top:241.1px;font-size:8px;line-height:9.6px;color:#333333;transform:scaleX(1.064);">Оборот</div>
<div style="left:798.3px;top:241.1px;font-size:8px;line-height:9.6px;color:#333333;transform:scaleX(1.068);">Выполн.</div>
<div style="left:-55.0px;top:258.8px;width:600px;text-align:center;font-size:7.3px;line-height:8.8px;color:#111;font-weight:bold;transform:scaleX(0.934);transform-origin:50% 50%;">БЕЛКОММЕРЦ ООО</div>
<div style="left:101.6px;top:258.8px;width:600px;text-align:center;font-size:7.3px;line-height:8.8px;color:#111;font-weight:bold;transform:scaleX(0.947);transform-origin:50% 50%;">Мереть-Вышестеблиевская (эксп.)-Мереть</div>
<div style="left:232.0px;top:258.8px;width:600px;text-align:center;font-size:7.3px;line-height:8.8px;color:#111;font-weight:bold;transform:scaleX(0.983);transform-origin:50% 50%;">22 150 927</div>
<div style="left:301.7px;top:258.8px;width:600px;text-align:center;font-size:7.3px;line-height:8.8px;color:#111;font-weight:bold;transform:scaleX(0.983);transform-origin:50% 50%;">2 563 552</div>
<div style="left:376.7px;top:258.8px;width:600px;text-align:center;font-size:7.3px;line-height:8.8px;color:#111;font-weight:bold;transform:scaleX(0.950);transform-origin:50% 50%;">11,6%</div>
<div style="left:451.8px;top:258.8px;width:600px;text-align:center;font-size:7.3px;line-height:8.8px;color:#111;font-weight:bold;transform:scaleX(0.983);transform-origin:50% 50%;">25,01</div>
<div style="left:-55.0px;top:270.1px;width:600px;text-align:center;font-size:7px;line-height:8.4px;color:#989898;transform:scaleX(0.910);transform-origin:50% 50%;">БЕЛКОММЕРЦ ООО</div>
<div style="left:101.6px;top:270.1px;width:600px;text-align:center;font-size:7px;line-height:8.4px;color:#989898;transform:scaleX(0.910);transform-origin:50% 50%;">Мереть-Лужская (эксп.)-Мереть</div>
<div style="left:232.0px;top:270.1px;width:600px;text-align:center;font-size:7px;line-height:8.4px;color:#989898;transform:scaleX(1.000);transform-origin:50% 50%;">8 224 205</div>
<div style="left:301.7px;top:270.1px;width:600px;text-align:center;font-size:7px;line-height:8.4px;color:#989898;transform:scaleX(1.000);transform-origin:50% 50%;">599 911</div>
<div style="left:376.7px;top:270.1px;width:600px;text-align:center;font-size:7px;line-height:8.4px;color:#989898;transform:scaleX(0.930);transform-origin:50% 50%;">7,3%</div>
<div style="left:451.8px;top:270.1px;width:600px;text-align:center;font-size:7px;line-height:8.4px;color:#989898;transform:scaleX(1.000);transform-origin:50% 50%;">25,57</div>
<div style="left:-55.0px;top:282.1px;width:600px;text-align:center;font-size:7px;line-height:8.4px;color:#989898;transform:scaleX(0.910);transform-origin:50% 50%;">БЕЛКОММЕРЦ ООО</div>
<div style="left:101.6px;top:282.1px;width:600px;text-align:center;font-size:7px;line-height:8.4px;color:#989898;transform:scaleX(0.910);transform-origin:50% 50%;">Мереть-Забайкальск (эксп.ЮКД)-Денисовский рзд</div>
<div style="left:232.0px;top:282.1px;width:600px;text-align:center;font-size:7px;line-height:8.4px;color:#989898;transform:scaleX(1.000);transform-origin:50% 50%;">5 789 135</div>
<div style="left:301.7px;top:282.1px;width:600px;text-align:center;font-size:7px;line-height:8.4px;color:#989898;transform:scaleX(1.000);transform-origin:50% 50%;">783 081</div>
<div style="left:376.7px;top:282.1px;width:600px;text-align:center;font-size:7px;line-height:8.4px;color:#989898;transform:scaleX(0.930);transform-origin:50% 50%;">13,5%</div>
<div style="left:451.8px;top:282.1px;width:600px;text-align:center;font-size:7px;line-height:8.4px;color:#989898;transform:scaleX(1.000);transform-origin:50% 50%;">34,84</div>
<div style="left:-55.0px;top:294.0px;width:600px;text-align:center;font-size:7px;line-height:8.4px;color:#989898;transform:scaleX(0.910);transform-origin:50% 50%;">БЕЛКОММЕРЦ ООО</div>
<div style="left:101.6px;top:294.0px;width:600px;text-align:center;font-size:7px;line-height:8.4px;color:#989898;transform:scaleX(0.910);transform-origin:50% 50%;">Мереть-Находка-Восточная (эксп.)-Мереть</div>
<div style="left:232.0px;top:294.0px;width:600px;text-align:center;font-size:7px;line-height:8.4px;color:#989898;transform:scaleX(1.000);transform-origin:50% 50%;">3 417 527</div>
<div style="left:301.7px;top:294.0px;width:600px;text-align:center;font-size:7px;line-height:8.4px;color:#989898;transform:scaleX(1.000);transform-origin:50% 50%;">-876 662</div>
<div style="left:376.7px;top:294.0px;width:600px;text-align:center;font-size:7px;line-height:8.4px;color:#989898;transform:scaleX(0.930);transform-origin:50% 50%;">-25,7%</div>
<div style="left:451.8px;top:294.0px;width:600px;text-align:center;font-size:7px;line-height:8.4px;color:#989898;transform:scaleX(1.000);transform-origin:50% 50%;">52,56</div>
<div style="left:-55.0px;top:306.0px;width:600px;text-align:center;font-size:7px;line-height:8.4px;color:#989898;transform:scaleX(0.910);transform-origin:50% 50%;">БЕЛКОММЕРЦ ООО</div>
<div style="left:101.6px;top:306.0px;width:600px;text-align:center;font-size:7px;line-height:8.4px;color:#989898;transform:scaleX(0.910);transform-origin:50% 50%;">Мереть-Находка-Восточная (эксп.)-Волочаевка I</div>
<div style="left:232.0px;top:306.0px;width:600px;text-align:center;font-size:7px;line-height:8.4px;color:#989898;transform:scaleX(1.000);transform-origin:50% 50%;">1 857 208</div>
<div style="left:301.7px;top:306.0px;width:600px;text-align:center;font-size:7px;line-height:8.4px;color:#989898;transform:scaleX(1.000);transform-origin:50% 50%;">1 010 500</div>
<div style="left:376.7px;top:306.0px;width:600px;text-align:center;font-size:7px;line-height:8.4px;color:#989898;transform:scaleX(0.930);transform-origin:50% 50%;">54,4%</div>
<div style="left:451.8px;top:306.0px;width:600px;text-align:center;font-size:7px;line-height:8.4px;color:#989898;transform:scaleX(1.000);transform-origin:50% 50%;">19,77</div>
<div style="left:-55.0px;top:317.9px;width:600px;text-align:center;font-size:7px;line-height:8.4px;color:#989898;transform:scaleX(0.910);transform-origin:50% 50%;">БЕЛКОММЕРЦ ООО</div>
<div style="left:101.6px;top:317.9px;width:600px;text-align:center;font-size:7px;line-height:8.4px;color:#989898;transform:scaleX(0.910);transform-origin:50% 50%;">Мереть-Вышестеблиевская (эксп.)-Тихоново</div>
<div style="left:232.0px;top:317.9px;width:600px;text-align:center;font-size:7px;line-height:8.4px;color:#989898;transform:scaleX(1.000);transform-origin:50% 50%;">1 131 604</div>
<div style="left:301.7px;top:317.9px;width:600px;text-align:center;font-size:7px;line-height:8.4px;color:#989898;transform:scaleX(1.000);transform-origin:50% 50%;">-305 885</div>
<div style="left:376.7px;top:317.9px;width:600px;text-align:center;font-size:7px;line-height:8.4px;color:#989898;transform:scaleX(0.930);transform-origin:50% 50%;">-27,0%</div>
<div style="left:451.8px;top:317.9px;width:600px;text-align:center;font-size:7px;line-height:8.4px;color:#989898;transform:scaleX(1.000);transform-origin:50% 50%;">45,72</div>
<div style="left:-55.0px;top:329.9px;width:600px;text-align:center;font-size:7px;line-height:8.4px;color:#989898;transform:scaleX(0.910);transform-origin:50% 50%;">БЕЛКОММЕРЦ ООО</div>
<div style="left:101.6px;top:329.9px;width:600px;text-align:center;font-size:7px;line-height:8.4px;color:#989898;transform:scaleX(0.910);transform-origin:50% 50%;">Мереть-Вышестеблиевская (эксп.)-Кадамовка</div>
<div style="left:232.0px;top:329.9px;width:600px;text-align:center;font-size:7px;line-height:8.4px;color:#989898;transform:scaleX(1.000);transform-origin:50% 50%;">1 021 445</div>
<div style="left:301.7px;top:329.9px;width:600px;text-align:center;font-size:7px;line-height:8.4px;color:#989898;transform:scaleX(1.000);transform-origin:50% 50%;">545 183</div>
<div style="left:376.7px;top:329.9px;width:600px;text-align:center;font-size:7px;line-height:8.4px;color:#989898;transform:scaleX(0.930);transform-origin:50% 50%;">53,4%</div>
<div style="left:451.8px;top:329.9px;width:600px;text-align:center;font-size:7px;line-height:8.4px;color:#989898;transform:scaleX(1.000);transform-origin:50% 50%;">22,69</div>
<div style="left:-55.0px;top:341.8px;width:600px;text-align:center;font-size:7px;line-height:8.4px;color:#989898;transform:scaleX(0.910);transform-origin:50% 50%;">БЕЛКОММЕРЦ ООО</div>
<div style="left:101.6px;top:341.8px;width:600px;text-align:center;font-size:7px;line-height:8.4px;color:#989898;transform:scaleX(0.910);transform-origin:50% 50%;">Мереть-Находка-Восточная (эксп.)-Новопавловка</div>
<div style="left:232.0px;top:341.8px;width:600px;text-align:center;font-size:7px;line-height:8.4px;color:#989898;transform:scaleX(1.000);transform-origin:50% 50%;">896 989</div>
<div style="left:301.7px;top:341.8px;width:600px;text-align:center;font-size:7px;line-height:8.4px;color:#989898;transform:scaleX(1.000);transform-origin:50% 50%;">325 825</div>
<div style="left:376.7px;top:341.8px;width:600px;text-align:center;font-size:7px;line-height:8.4px;color:#989898;transform:scaleX(0.930);transform-origin:50% 50%;">36,3%</div>
<div style="left:451.8px;top:341.8px;width:600px;text-align:center;font-size:7px;line-height:8.4px;color:#989898;transform:scaleX(1.000);transform-origin:50% 50%;">30,03</div>
<div style="left:-55.0px;top:353.8px;width:600px;text-align:center;font-size:7px;line-height:8.4px;color:#989898;transform:scaleX(0.910);transform-origin:50% 50%;">БЕЛКОММЕРЦ ООО</div>
<div style="left:101.6px;top:353.8px;width:600px;text-align:center;font-size:7px;line-height:8.4px;color:#989898;transform:scaleX(0.910);transform-origin:50% 50%;">Мереть-Вышестеблиевская (эксп.)-Лабинская</div>
<div style="left:232.0px;top:353.8px;width:600px;text-align:center;font-size:7px;line-height:8.4px;color:#989898;transform:scaleX(1.000);transform-origin:50% 50%;">794 511</div>
<div style="left:301.7px;top:353.8px;width:600px;text-align:center;font-size:7px;line-height:8.4px;color:#989898;transform:scaleX(1.000);transform-origin:50% 50%;">334 225</div>
<div style="left:376.7px;top:353.8px;width:600px;text-align:center;font-size:7px;line-height:8.4px;color:#989898;transform:scaleX(0.930);transform-origin:50% 50%;">42,1%</div>
<div style="left:451.8px;top:353.8px;width:600px;text-align:center;font-size:7px;line-height:8.4px;color:#989898;transform:scaleX(1.000);transform-origin:50% 50%;">29,67</div>
<div style="left:-55.0px;top:365.7px;width:600px;text-align:center;font-size:7px;line-height:8.4px;color:#989898;transform:scaleX(0.910);transform-origin:50% 50%;">БЕЛКОММЕРЦ ООО</div>
<div style="left:101.6px;top:365.7px;width:600px;text-align:center;font-size:7px;line-height:8.4px;color:#989898;transform:scaleX(0.910);transform-origin:50% 50%;">Мереть-Тихвин-Питкяранта</div>
<div style="left:232.0px;top:365.7px;width:600px;text-align:center;font-size:7px;line-height:8.4px;color:#989898;transform:scaleX(1.000);transform-origin:50% 50%;">682 027</div>
<div style="left:301.7px;top:365.7px;width:600px;text-align:center;font-size:7px;line-height:8.4px;color:#989898;transform:scaleX(1.000);transform-origin:50% 50%;">298 549</div>
<div style="left:376.7px;top:365.7px;width:600px;text-align:center;font-size:7px;line-height:8.4px;color:#989898;transform:scaleX(0.930);transform-origin:50% 50%;">43,8%</div>
<div style="left:451.8px;top:365.7px;width:600px;text-align:center;font-size:7px;line-height:8.4px;color:#989898;transform:scaleX(1.000);transform-origin:50% 50%;">24,22</div>
<div style="left:-55.0px;top:377.7px;width:600px;text-align:center;font-size:7px;line-height:8.4px;color:#989898;transform:scaleX(0.910);transform-origin:50% 50%;">остальные клиенты</div>
<div style="left:101.6px;top:377.7px;width:600px;text-align:center;font-size:7px;line-height:8.4px;color:#989898;transform:scaleX(0.910);transform-origin:50% 50%;">остальные маршруты</div>
<div style="left:232.0px;top:377.7px;width:600px;text-align:center;font-size:7px;line-height:8.4px;color:#989898;transform:scaleX(1.000);transform-origin:50% 50%;">87 169 958</div>
<div style="left:301.7px;top:377.7px;width:600px;text-align:center;font-size:7px;line-height:8.4px;color:#989898;transform:scaleX(1.000);transform-origin:50% 50%;">7 386 411</div>
<div style="left:376.7px;top:377.7px;width:600px;text-align:center;font-size:7px;line-height:8.4px;color:#989898;transform:scaleX(0.930);transform-origin:50% 50%;">8,5%</div>
<div style="left:451.8px;top:377.7px;width:600px;text-align:center;font-size:7px;line-height:8.4px;color:#989898;transform:scaleX(1.000);transform-origin:50% 50%;">29 891,86</div>
<div style="left:305.1px;top:255.5px;width:192.9px;height:13.9px;background:transparent;border:2px solid #1F6E43;box-sizing:border-box;"></div>
<div style="left:494.6px;top:264.6px;width:5.8px;height:6.0px;background:#1F6E43;border-left:1px solid #fff;border-top:1px solid #fff;box-sizing:border-box;"></div>
<div style="left:842.6px;top:232.7px;width:218.1px;height:154.8px;background:#fff;"></div>
<div style="left:933.8px;top:239.0px;font-size:10px;line-height:12.0px;color:#000;font-weight:bold;transform:scaleX(0.964);">Оборот</div>
<div style="left:908.4px;top:264.8px;width:120.3px;height:5.9px;background:#ED7D31;"></div>
<div style="left:908.4px;top:264.8px;width:120.3px;height:0.7px;background:#B85A1E;opacity:0.55;"></div>
<div style="left:1027.3px;top:264.8px;width:1.4px;height:5.9px;background:#B85A1E;"></div>
<div style="left:908.4px;top:270.7px;width:115.6px;height:7.1px;background:#4A86C5;"></div>
<div style="left:908.4px;top:270.7px;width:115.6px;height:0.7px;background:#2E5F94;opacity:0.55;"></div>
<div style="left:1022.6px;top:270.7px;width:1.4px;height:7.1px;background:#2E5F94;"></div>
<div style="left:908.8px;top:285.4px;width:49.9px;height:6.6px;background:#F4B183;"></div>
<div style="left:908.8px;top:285.4px;width:49.9px;height:0.7px;background:#C07A4A;opacity:0.55;"></div>
<div style="left:957.3px;top:285.4px;width:1.4px;height:6.6px;background:#C07A4A;"></div>
<div style="left:908.8px;top:292.0px;width:59.4px;height:6.5px;background:#5D9AD7;"></div>
<div style="left:908.8px;top:292.0px;width:59.4px;height:0.7px;background:#3D6EA6;opacity:0.55;"></div>
<div style="left:966.8px;top:292.0px;width:1.4px;height:6.5px;background:#3D6EA6;"></div>
<div style="left:909.3px;top:305.9px;width:10.2px;height:5.6px;background:#F4B183;"></div>
<div style="left:909.3px;top:305.9px;width:10.2px;height:0.7px;background:#C07A4A;opacity:0.55;"></div>
<div style="left:918.1px;top:305.9px;width:1.4px;height:5.6px;background:#C07A4A;"></div>
<div style="left:909.3px;top:311.5px;width:1.9px;height:6.2px;background:#5D9AD7;"></div>
<div style="left:909.3px;top:311.5px;width:1.9px;height:0.7px;background:#3D6EA6;opacity:0.55;"></div>
<div style="left:909.8px;top:311.5px;width:1.4px;height:6.2px;background:#3D6EA6;"></div>
<div style="left:910.0px;top:326.5px;width:10.2px;height:5.9px;background:#F4B183;"></div>
<div style="left:910.0px;top:326.5px;width:10.2px;height:0.7px;background:#C07A4A;opacity:0.55;"></div>
<div style="left:918.8px;top:326.5px;width:1.4px;height:5.9px;background:#C07A4A;"></div>
<div style="left:910.0px;top:332.4px;width:4.8px;height:5.5px;background:#5D9AD7;"></div>
<div style="left:910.0px;top:332.4px;width:4.8px;height:0.7px;background:#3D6EA6;opacity:0.55;"></div>
<div style="left:913.4px;top:332.4px;width:1.4px;height:5.5px;background:#3D6EA6;"></div>
<div style="left:910.7px;top:346.2px;width:48.5px;height:7.6px;background:#F4B183;"></div>
<div style="left:910.7px;top:346.2px;width:48.5px;height:0.7px;background:#C07A4A;opacity:0.55;"></div>
<div style="left:957.8px;top:346.2px;width:1.4px;height:7.6px;background:#C07A4A;"></div>
<div style="left:910.7px;top:353.8px;width:49.9px;height:6.6px;background:#5D9AD7;"></div>
<div style="left:910.7px;top:353.8px;width:49.9px;height:0.7px;background:#3D6EA6;opacity:0.55;"></div>
<div style="left:959.2px;top:353.8px;width:1.4px;height:6.6px;background:#3D6EA6;"></div>
<div style="left:877.5px;top:268.4px;font-size:7.0px;line-height:8.4px;color:#595959;transform:scaleX(0.951);">Оборот</div>
<div style="left:865.0px;top:289.1px;font-size:7.0px;line-height:8.4px;color:#595959;transform:scaleX(0.944);">Порож (сут)</div>
<div style="left:855.4px;top:309.2px;font-size:7.0px;line-height:8.4px;color:#595959;transform:scaleX(0.929);">Простой (выгр)</div>
<div style="left:855.0px;top:330.5px;font-size:7.0px;line-height:8.4px;color:#595959;transform:scaleX(0.948);">Простой (погр)</div>
<div style="left:872.5px;top:350.3px;font-size:7.0px;line-height:8.4px;color:#595959;transform:scaleX(0.966);">Груз (сут)</div>
<div style="left:1032.3px;top:266.0px;font-size:5.9px;line-height:7.1px;color:#404040;transform:scaleX(1.029);">26,0</div>
<div style="left:1029.2px;top:272.4px;font-size:5.9px;line-height:7.1px;color:#404040;transform:scaleX(1.029);">25,0</div>
<div style="left:963.2px;top:286.4px;font-size:5.9px;line-height:7.1px;color:#404040;transform:scaleX(1.070);">11,0</div>
<div style="left:972.2px;top:292.8px;font-size:5.9px;line-height:7.1px;color:#404040;transform:scaleX(1.070);">11,1</div>
<div style="left:923.5px;top:306.2px;font-size:5.9px;line-height:7.1px;color:#404040;transform:scaleX(1.061);">2,0</div>
<div style="left:914.5px;top:312.2px;font-size:5.9px;line-height:7.1px;color:#404040;transform:scaleX(1.061);">0,0</div>
<div style="left:924.0px;top:327.2px;font-size:5.9px;line-height:7.1px;color:#404040;transform:scaleX(1.061);">2,0</div>
<div style="left:916.0px;top:332.5px;font-size:5.9px;line-height:7.1px;color:#404040;transform:scaleX(1.061);">0,6</div>
<div style="left:963.9px;top:347.4px;font-size:5.9px;line-height:7.1px;color:#404040;transform:scaleX(1.070);">11,0</div>
<div style="left:965.5px;top:353.8px;font-size:5.9px;line-height:7.1px;color:#404040;transform:scaleX(1.070);">11,3</div>
<div style="left:931.0px;top:377.1px;width:3.9px;height:3.8px;background:#ED7D31;"></div>
<div style="left:936.8px;top:375.7px;font-size:6.4px;line-height:7.7px;color:#595959;transform:scaleX(0.973);">план</div>
<div style="left:957.0px;top:377.1px;width:3.9px;height:3.8px;background:#4A86C5;"></div>
<div style="left:963.0px;top:375.7px;font-size:6.4px;line-height:7.7px;color:#595959;transform:scaleX(0.924);">факт</div>
<div style="left:318.3px;top:425.4px;font-size:9.2px;line-height:11.0px;color:#000;font-weight:bold;transform:scaleX(1.042);">Динамика оборта по маршруту</div>
<div style="left:513.8px;top:432.7px;font-size:7.8px;line-height:9.4px;color:#595959;transform:scaleX(1.035);">Целевой оборот</div>
<div style="left:516.8px;top:447.4px;width:1.1px;height:15.6px;background:#2C4A6B;"></div>
<div style="left:526.9px;top:448.3px;font-size:13.4px;line-height:16.1px;color:#2F5280;transform:scaleX(1.040);">26,0</div>
<div style="left:233.3px;top:480.9px;width:353.4px;height:0;border-top:1px dashed #D2D2D2;"></div>
<div style="left:233.3px;top:528.8px;width:353.4px;height:0;border-top:1px dashed #D2D2D2;"></div>
<div style="left:233.3px;top:577.1px;width:353.4px;height:0;border-top:1px dashed #D2D2D2;"></div>
<div style="left:233.3px;top:624.3px;width:353.4px;height:0;border-top:1px dashed #D2D2D2;"></div>
<div style="left:235px;top:481.4px;width:0;height:143.4px;border-left:1px dashed #D2D2D2;"></div>
<div style="left:236.0px;top:507.0px;width:146.0px;height:18.7px;background:#B9C3CF;"></div>
<div style="left:381.6px;top:500.0px;width:2.4px;height:17.8px;background:#F4B183;"></div>
<div style="left:384.0px;top:485.0px;width:148.0px;height:18.8px;background:#BDD7EE;"></div>
<div style="left:9.0px;top:513.0px;width:600px;text-align:center;font-size:7.2px;line-height:8.6px;color:#404040;transform:scaleX(1.000);transform-origin:50% 50%;">14,66</div>
<div style="left:157.9px;top:491.0px;width:600px;text-align:center;font-size:7.2px;line-height:8.6px;color:#404040;transform:scaleX(1.000);transform-origin:50% 50%;">14,73</div>
<div style="left:83.0px;top:506.4px;width:600px;text-align:center;font-size:6.4px;line-height:7.7px;color:#404040;transform:scaleX(1.000);transform-origin:50% 50%;">0,22</div>
<div style="left:479.4px;top:513.9px;font-size:6.4px;line-height:7.7px;color:#262626;font-weight:bold;transform:scaleX(0.978);">Итого оборот:</div>
<div style="left:524.7px;top:513.7px;font-size:6.6px;line-height:7.9px;color:#C0392B;font-weight:bold;transform:scaleX(0.951);">29,60</div>
<div style="left:206.0px;top:502.1px;font-size:7px;line-height:8.4px;color:#404040;transform:scaleX(0.932);">июл. 23</div>
<div style="left:236.0px;top:555.2px;width:143.9px;height:17.5px;background:#B9C3CF;"></div>
<div style="left:379.9px;top:548.1px;width:3.1px;height:17.7px;background:#F4B183;"></div>
<div style="left:383.0px;top:533.2px;width:129.9px;height:17.7px;background:#BDD7EE;"></div>
<div style="left:7.8px;top:561.0px;width:600px;text-align:center;font-size:7.2px;line-height:8.6px;color:#404040;transform:scaleX(1.000);transform-origin:50% 50%;">14,40</div>
<div style="left:148.2px;top:538.8px;width:600px;text-align:center;font-size:7.2px;line-height:8.6px;color:#404040;transform:scaleX(1.000);transform-origin:50% 50%;">12,97</div>
<div style="left:81.0px;top:554.7px;width:600px;text-align:center;font-size:6.4px;line-height:7.7px;color:#404040;transform:scaleX(1.000);transform-origin:50% 50%;">0,37</div>
<div style="left:480.0px;top:558.0px;font-size:6.4px;line-height:7.7px;color:#262626;font-weight:bold;transform:scaleX(0.978);">Итого оборот:</div>
<div style="left:525.3px;top:557.8px;font-size:6.6px;line-height:7.9px;color:#C0392B;font-weight:bold;transform:scaleX(0.951);">27,74</div>
<div style="left:206.0px;top:549.7px;font-size:7px;line-height:8.4px;color:#404040;transform:scaleX(0.935);">июн. 23</div>
<div style="left:236.0px;top:603.2px;width:127.8px;height:17.3px;background:#B9C3CF;"></div>
<div style="left:363.8px;top:595.9px;width:6.4px;height:17.9px;background:#F4B183;"></div>
<div style="left:370.2px;top:581.0px;width:119.8px;height:17.8px;background:#BDD7EE;"></div>
<div style="left:0.0px;top:609.4px;width:600px;text-align:center;font-size:7.2px;line-height:8.6px;color:#404040;transform:scaleX(1.000);transform-origin:50% 50%;">12,86</div>
<div style="left:129.7px;top:587.4px;width:600px;text-align:center;font-size:7.2px;line-height:8.6px;color:#404040;transform:scaleX(1.000);transform-origin:50% 50%;">12,00</div>
<div style="left:67.4px;top:601.8px;width:600px;text-align:center;font-size:6.4px;line-height:7.7px;color:#404040;transform:scaleX(1.000);transform-origin:50% 50%;">0,58</div>
<div style="left:435.9px;top:605.7px;font-size:6.4px;line-height:7.7px;color:#262626;font-weight:bold;transform:scaleX(0.978);">Итого оборот:</div>
<div style="left:481.2px;top:605.5px;font-size:6.6px;line-height:7.9px;color:#4E9A7E;font-weight:bold;transform:scaleX(0.951);">25,44</div>
<div style="left:206.0px;top:597.2px;font-size:7px;line-height:8.4px;color:#404040;transform:scaleX(0.951);">май. 23</div>
<div style="left:279.3px;top:633.5px;width:3.8px;height:4.5px;background:#B9C3CF;"></div>
<div style="left:284.8px;top:631.9px;font-size:7px;line-height:8.4px;color:#595959;transform:scaleX(1.087);">Груз (сут)</div>
<div style="left:329.0px;top:633.5px;width:3.8px;height:4.5px;background:#F4B183;"></div>
<div style="left:335.5px;top:631.9px;font-size:7px;line-height:8.4px;color:#595959;transform:scaleX(1.056);">Простой (погр)</div>
<div style="left:399.4px;top:633.5px;width:3.8px;height:4.5px;background:#FFE699;"></div>
<div style="left:405.6px;top:631.9px;font-size:7px;line-height:8.4px;color:#595959;transform:scaleX(1.042);">Простой (выгр)</div>
<div style="left:466.9px;top:633.5px;width:3.8px;height:4.5px;background:#BDD7EE;"></div>
<div style="left:473.5px;top:631.9px;font-size:7px;line-height:8.4px;color:#595959;transform:scaleX(1.051);">Порож (сут)</div>
<div style="left:727.0px;top:424.1px;font-size:9.2px;line-height:11.0px;color:#000;font-weight:bold;transform:scaleX(1.047);">Мереть-Вышестеблиевская (эксп.)-Мереть</div>
<div style="left:635.0px;top:442.0px;width:92.4px;height:34.0px;background:#F8F8F8;box-shadow:0 0 1.5px rgba(0,0,0,0.08);"></div>
<div style="left:643.5px;top:444.2px;font-size:7.8px;line-height:9.4px;color:#595959;transform:scaleX(1.010);">Дох. ставка за рейс</div>
<div style="left:655.5px;top:458.9px;font-size:13px;line-height:15.6px;color:#2F5482;transform:scaleX(1.104);">119 735</div>
<div style="left:736.0px;top:442.0px;width:93.3px;height:34.0px;background:#F8F8F8;box-shadow:0 0 1.5px rgba(0,0,0,0.08);"></div>
<div style="left:769.1px;top:444.2px;font-size:7.8px;line-height:9.4px;color:#595959;transform:scaleX(0.960);">Тариф</div>
<div style="left:761.0px;top:458.9px;font-size:13px;line-height:15.6px;color:#2F5482;transform:scaleX(1.081);">46 996</div>
<div style="left:839.0px;top:442.0px;width:91.4px;height:34.0px;background:#F8F8F8;box-shadow:0 0 1.5px rgba(0,0,0,0.08);"></div>
<div style="left:857.1px;top:444.2px;font-size:7.8px;line-height:9.4px;color:#595959;transform:scaleX(1.020);">Оборот вагона</div>
<div style="left:871.1px;top:458.9px;font-size:13px;line-height:15.6px;color:#2F5482;transform:scaleX(1.110);">25,0</div>
<div style="left:954.0px;top:442.0px;width:87.8px;height:34.0px;background:#F8F8F8;box-shadow:0 0 1.5px rgba(0,0,0,0.08);"></div>
<div style="left:960.9px;top:444.2px;font-size:7.8px;line-height:9.4px;color:#595959;transform:scaleX(1.008);">Дох. ставка в сутки</div>
<div style="left:979.5px;top:458.9px;font-size:13px;line-height:15.6px;color:#2F5482;transform:scaleX(1.091);">3 036</div>
<svg style="left:0;top:0" width="1096" height="691" viewBox="0 0 1096 691">
<defs><clipPath id="mc"><path d="M657,486.1 L1019,485.2 Q1045.6,485.2 1045.6,512 L1043.6,643 Q1043.3,669.6 1017,669.6 L660,659.8 Q633.2,659.6 633.1,634 L631.1,512 Q631.1,486.1 657,486.1 Z"/></clipPath>
<filter id="sh" x="-5%" y="-5%" width="110%" height="115%"><feGaussianBlur stdDeviation="1.6"/></filter></defs>
<path d="M657,486.1 L1019,485.2 Q1045.6,485.2 1045.6,512 L1043.6,643 Q1043.3,669.6 1017,669.6 L660,659.8 Q633.2,659.6 633.1,634 L631.1,512 Q631.1,486.1 657,486.1 Z" transform="translate(2.2,2.6)" fill="#3a3a3a" filter="url(#sh)" opacity="0.85"/>
<g clip-path="url(#mc)">
<rect x="625" y="480" width="430" height="200" fill="#F9CFBC"/>
<path d="M688.4,512.6 L669.6,513.6 L663.7,501.3 M718.7,495.6 L715.1,488.4 L717.4,476.0 L720.3,488.5 L726.0,490.9 L706.7,493.3 M643.2,523.2 L633.9,513.2 L617.1,507.8 L631.0,498.9 M731.0,585.8 L713.3,591.8 L716.1,595.1 L715.9,596.0 L728.1,595.0 M787.4,544.2 L800.3,549.8 L789.1,551.9 L790.2,562.4 M755.4,533.2 L738.6,530.9 L749.9,521.2 M715.7,495.9 L727.3,497.9 L743.8,492.7 M749.7,579.2 L730.7,567.8 L720.6,573.3 L701.5,579.8 L693.1,581.9 L701.1,580.4 M753.2,623.1 L732.2,622.0 L717.6,611.3 L698.2,618.8 L681.9,611.7 M699.5,620.7 L684.8,618.0 L675.1,607.8 M706.0,572.5 L727.4,577.6 L722.2,570.1 L703.8,560.3 L710.8,546.7 L725.4,537.8 M681.5,511.9 L686.4,506.8 L669.9,516.8 L689.7,521.2 L700.2,520.0 M778.7,632.8 L774.2,629.8 L773.4,627.0 L759.8,640.6 L757.2,629.7 L761.6,618.5 M728.5,570.5 L733.5,558.5 L720.7,555.0 L726.6,567.7 L731.1,567.0 M654.0,563.2 L653.2,557.9 L637.5,564.9 L648.1,564.3 L656.5,564.8 L643.6,577.4 M694.7,593.5 L706.0,587.9 L712.3,576.4 M774.5,567.8 L768.1,560.0 L770.0,560.1 L776.0,563.2 M765.1,603.7 L778.6,612.7 L789.1,605.0 L789.9,601.0 M639.8,494.2 L638.6,485.6 L643.2,481.3 L656.8,487.5 L650.1,500.8 M648.3,505.3 L634.9,497.0 L640.4,508.3 L655.4,507.7 L662.1,516.1 L643.8,520.6 M785.1,607.3 L784.1,598.3 L796.9,593.7 L810.1,606.9 M700.3,550.2 L710.2,541.0 L693.8,531.2 M784.3,611.0 L789.2,613.7 L788.1,625.9 L772.9,627.3 M638.5,609.9 L639.7,622.0 L636.8,632.5 M771.3,521.7 L758.7,521.7 L770.3,516.8 L772.2,526.2 L752.9,532.9 M783.1,589.4 L797.5,600.0 L781.3,590.2 L781.7,600.6 L793.9,603.7 L806.0,593.9 M658.4,582.9 L660.8,578.0 L661.6,579.5 M764.4,505.9 L753.3,499.7 L765.3,499.9 M727.7,604.0 L725.2,607.1 L725.4,607.5 M749.3,557.9 L749.6,550.8 L750.7,561.3 L769.5,573.2 L786.8,564.8 L784.5,562.5 M699.7,537.4 L696.6,529.4 L687.9,518.8 L700.1,531.1 M741.2,544.9 L758.0,558.0 L745.7,570.7 L741.2,570.3 L762.8,579.6 M661.6,554.7 L654.6,546.2 L646.6,552.4 L625.4,553.9 L622.8,540.4 L615.4,543.9 M719.5,499.6 L740.3,488.6 L730.0,475.7 L742.2,469.3 M656.4,553.3 L652.2,554.4 L652.9,554.2 L645.3,548.0 L658.5,539.2 M782.7,530.3 L788.6,538.8 L770.3,548.8 M646.0,619.4 L624.5,633.3 L620.9,644.9 L626.2,632.1 L635.5,644.4 L656.1,637.7 M664.9,629.8 L666.3,621.6 L663.9,626.4 L653.8,634.9 L675.5,622.0 M638.0,565.8 L638.7,558.7 L636.3,563.2 L642.9,567.5 M725.1,623.3 L733.3,636.8 L726.4,646.1 L735.5,649.9 L731.3,645.7 M644.0,509.5 L649.5,520.1 L646.4,507.7 M744.8,547.1 L749.1,552.5 L729.1,543.7 L718.9,529.8 L713.0,525.0 M797.5,538.5 L818.0,533.2 L811.7,519.2 M698.0,561.2 L686.9,568.9 L668.9,577.8 L653.2,580.2 M700.0,534.9 L681.7,547.8 L697.3,538.1 L714.5,546.1 M733.4,604.6 L718.0,610.9 L724.3,598.1 L739.1,609.1 L744.7,615.7 L758.4,605.6 M721.4,565.7 L735.8,568.0 L753.1,573.1 M749.4,524.5 L729.2,528.3 L749.5,524.9 M709.5,497.6 L715.0,502.7 L714.6,488.8 M766.6,602.2 L773.6,590.1 L784.0,583.2 M647.3,529.8 L635.4,534.0 L633.7,543.7 L615.1,555.2 M682.4,497.0 L663.8,487.1 L653.0,494.0 L644.4,495.8 M637.1,499.1 L657.8,487.9 L645.4,487.6 L654.6,481.6 L653.1,489.1 M798.9,572.4 L819.9,584.6 L798.7,583.4 L812.8,596.5 L810.6,590.1 M669.6,631.8 L650.9,620.4 L661.8,613.7 L655.6,616.6 M739.2,531.9 L748.2,524.4 L765.7,524.0 M639.1,490.5 L647.1,487.9 L657.1,485.5 L651.6,474.9 L644.2,470.0 L637.1,467.2 M790.1,519.4 L807.7,513.5 L802.1,510.5 M799.8,578.4 L818.5,585.5 L834.1,579.4 L814.4,583.9 L820.3,574.1 M795.2,555.4 L781.6,551.9 L801.6,562.6 L815.4,566.3 L833.6,578.7 M725.6,597.9 L744.7,595.4 L749.8,585.3 M778.5,562.8 L764.0,560.5 L754.4,553.6 L764.9,557.9 M702.0,525.8 L704.5,522.8 L689.9,513.4 L677.1,524.7 L676.9,516.9 L694.8,530.8 M709.2,510.9 L698.0,501.8 L700.4,496.8 L694.6,505.4 M668.4,493.0 L663.2,499.9 L650.4,493.5 L661.5,493.4 L664.8,489.5 L673.0,490.3 M765.4,617.3 L755.3,610.3 L750.9,608.7 M792.4,617.3 L776.0,615.2 L787.6,623.7 M794.8,563.5 L790.0,575.4 L804.3,585.4 M795.4,527.3 L783.3,517.5 L804.0,506.6 M771.2,595.2 L752.9,602.9 L731.0,592.4 L734.0,579.5 L743.5,592.4 L749.1,593.2 M707.2,604.6 L688.3,605.3 L691.9,602.1 M671.9,580.2 L673.5,594.1 L663.8,588.9 M773.5,526.4 L775.6,513.2 L771.7,517.4 L752.1,508.8 M781.0,587.1 L770.3,591.8 L789.0,584.1 M640.6,540.7 L634.6,537.8 L612.9,532.0 L628.1,519.9 L627.9,511.5 L639.6,502.9 M711.7,529.8 L694.5,533.2 L699.4,544.3 L698.7,555.8 L679.2,558.5 M787.1,498.2 L808.0,488.1 L788.3,475.8 M699.9,624.7 L710.1,638.7 L729.1,633.9 L715.3,646.1 L726.1,633.0 M744.6,546.8 L766.0,545.2 L748.8,533.4 L730.3,531.1 L747.3,532.8 M760.2,547.0 L774.4,545.1 L754.5,544.4 L748.9,556.1 L735.4,552.3 M783.0,494.5 L771.9,498.1 L767.7,494.6 L766.1,503.1 L746.9,494.5 L727.6,497.5 M694.9,540.2 L684.4,546.3 L676.4,540.0 M635.6,603.3 L614.7,595.9 L613.6,608.7 M792.4,548.0 L810.6,556.8 L794.4,556.7 L772.8,568.8 L764.2,574.1 M660.0,525.4 L658.2,533.4 L662.5,533.7 L657.7,524.2 L653.6,528.4 M714.5,571.7 L735.6,582.4 L757.1,575.8 L738.8,564.5 M717.2,596.5 L702.9,586.2 L701.1,597.1 L689.5,598.2 L701.5,605.5 L713.8,599.7 M681.1,530.1 L691.6,521.7 L680.5,514.6 L665.2,525.4 L668.7,520.5 M700.4,638.9 L706.9,627.7 L705.3,614.7 L683.5,625.4 M673.1,557.2 L652.9,551.5 L636.2,542.8 L657.0,545.1 L675.9,541.5 M1005.2,566.3 L1017.3,571.0 L995.6,574.8 L1004.8,570.6 L984.4,566.1 M791.5,660.0 L795.9,664.2 L782.8,650.5 M865.1,605.3 L870.4,593.5 L849.8,593.4 L849.1,590.8 M986.9,602.9 L993.0,591.4 L978.2,596.9 L974.3,590.8 M860.0,652.0 L870.8,662.8 L867.0,649.3 L878.7,657.8 L885.1,654.7 M885.3,650.1 L903.0,648.0 L917.1,645.4 L933.9,644.3 L919.1,630.7 L921.3,634.6 M1016.5,505.1 L1027.0,495.9 L1020.3,486.5 L1005.9,474.4 L1000.7,481.5 M986.0,626.8 L969.5,639.2 L990.5,638.7 L970.8,650.7 L965.9,662.0 M941.3,630.2 L947.5,640.2 L952.8,643.4 L939.4,642.6 M927.0,497.1 L921.9,486.5 L910.8,492.8 L928.2,480.0 M926.2,618.8 L933.6,613.8 L928.7,612.6 M1000.7,622.3 L992.3,615.3 L987.4,611.5 L987.6,602.5 L965.7,616.2 L964.2,614.7 M940.8,629.2 L954.5,626.4 L935.4,622.5 L929.5,630.9 M911.1,601.7 L917.1,590.0 L927.4,597.8 M913.0,499.2 L919.7,507.2 L898.8,495.0 L903.9,500.4 L886.7,490.1 L903.7,484.2 M990.9,625.1 L971.7,621.0 L983.0,611.4 L1000.5,605.1 M992.1,514.4 L979.2,507.8 L979.5,502.7 L959.1,493.8 L944.2,506.0 L952.1,517.1 M823.9,623.4 L835.7,610.8 L851.4,623.8 M897.8,578.6 L886.9,579.6 L902.6,586.3 M876.6,553.9 L880.0,550.0 L891.6,548.3 L877.4,555.2 L857.5,564.1 M845.9,598.7 L856.2,605.6 L844.0,599.7 L849.5,597.4 L843.5,584.8 M907.0,594.1 L886.0,580.2 L879.6,569.2 M872.9,528.1 L876.8,519.8 L882.2,519.1 L866.2,531.4 L854.9,521.5 M804.9,598.5 L800.6,591.9 L779.1,596.0 L781.8,591.8 L788.3,590.2 M1023.7,614.7 L1008.9,600.7 L989.6,587.4 L975.8,577.9 M1017.1,507.8 L1001.3,499.4 L1006.1,499.6 L1012.3,508.4 M825.4,542.6 L830.9,556.4 L840.8,555.8 L842.5,552.3 L839.7,563.9 M800.9,601.4 L788.9,590.4 L777.1,577.5 L769.8,584.5 M960.7,633.7 L950.4,635.2 L947.6,643.3 M916.0,535.1 L897.8,535.3 L883.3,546.6 L898.3,538.3 M821.4,645.5 L838.1,640.7 L826.6,652.2 L832.4,657.6 M953.0,656.4 L951.7,657.3 L930.0,644.0 L950.1,636.6 L967.0,644.7 L962.2,647.1 M927.0,519.2 L906.1,508.1 L925.0,503.8 M816.9,494.9 L801.0,498.9 L780.8,486.8 M792.1,635.6 L778.9,648.3 L780.4,652.9 L797.1,660.1 L806.4,656.8 M844.1,524.5 L823.6,534.3 L837.4,538.0 M994.5,597.4 L993.5,587.1 L1006.4,591.2 L997.3,586.6 L986.8,582.4 M1021.8,498.2 L1039.9,505.8 L1044.4,505.1 L1035.0,512.0 L1047.7,498.9 M914.8,506.7 L923.8,507.8 L911.4,517.9 L893.4,526.9 L878.9,512.9 L865.8,520.2 M1034.2,490.7 L1016.5,496.2 L1030.8,509.3 L1034.8,522.1 L1035.5,524.3 L1020.5,533.1 M1024.0,529.4 L1006.8,533.2 L988.4,541.2 L997.0,549.3 M943.3,550.5 L962.1,561.4 L972.9,559.2 L979.3,555.7 L970.7,553.6 L972.6,544.4 M1035.4,597.2 L1019.0,599.9 L1027.3,602.8 L1006.8,605.1 L1007.8,615.4 L1005.6,616.9 M864.1,568.7 L867.6,558.3 L865.9,569.0 L854.3,560.4 L845.6,566.1 M999.4,516.3 L1020.2,522.5 L1024.8,518.3 L1013.2,531.1 M847.3,652.3 L832.5,656.8 L819.1,647.0 M818.6,541.4 L815.7,532.9 L821.8,521.8 L808.9,518.7 L788.3,515.9 M985.7,607.9 L984.0,597.9 L988.6,595.2 L999.2,606.6 L996.1,608.7 M974.8,561.6 L982.2,565.9 L998.8,569.8 L1002.5,562.2 M827.2,511.1 L819.0,514.7 L801.3,512.5 L813.7,518.4 L819.4,511.4 L816.0,510.2 M941.6,559.6 L959.0,554.8 L937.4,564.1 L955.4,553.0 M845.3,527.0 L846.2,515.9 L849.4,517.0 L859.0,517.4 M946.2,630.9 L942.3,643.5 L929.5,648.6 L924.8,656.0 L908.2,669.6 M872.4,499.6 L867.2,487.3 L848.5,499.0 L854.2,503.9 L857.7,492.9 M858.9,558.1 L880.7,571.0 L879.0,561.6 L897.9,549.5 M987.6,522.8 L1001.4,512.9 L1008.7,522.2 L1021.7,519.8 M1039.0,619.2 L1051.3,618.3 L1063.8,610.8 L1072.8,616.0 M1035.6,605.4 L1013.7,611.6 L1004.0,604.5 L995.3,603.9 L992.2,607.7 L999.2,603.9 M1021.5,635.3 L1003.2,637.1 L995.5,649.5 M918.0,548.7 L924.9,540.5 L906.1,534.8 M681.0,552.4 L697.7,551.0 L711.9,553.2 L724.7,553.1 L739.4,554.2 M681.0,552.4 L694.8,563.8 L711.2,573.6 L726.2,582.5 L740.7,588.9 M681.0,552.4 L687.1,563.1 L694.9,578.1 L703.1,591.4 L711.4,606.9 M681.0,552.4 L680.8,564.1 L684.1,573.1 L684.8,585.3 L686.6,595.2 M681.0,552.4 L681.2,566.2 L676.6,578.0 L674.7,587.9 L669.2,602.0 M681.0,552.4 L666.2,563.8 L655.4,573.1 L641.4,584.0 L626.8,593.0 M681.0,552.4 L671.5,557.5 L662.7,560.9 L650.6,564.2 L636.7,567.7 M681.0,552.4 L666.3,555.9 L654.9,555.6 L639.4,556.1 L623.5,554.9 M681.0,552.4 L675.1,545.0 L669.3,539.5 L660.9,534.0 L652.6,528.5 M681.0,552.4 L676.4,545.8 L671.4,536.6 L664.9,530.4 L657.6,521.8 M681.0,552.4 L680.6,534.5 L675.1,519.9 L673.2,502.5 L671.5,489.3 M681.0,552.4 L685.5,539.9 L689.7,528.2 L690.5,519.9 L694.6,508.4 M681.0,552.4 L686.0,545.2 L693.0,537.4 L697.7,531.7 L703.9,523.5 M681.0,552.4 L690.2,548.6 L702.6,546.7 L715.4,539.8 L728.9,535.2" stroke="#D9A294" stroke-width="0.45" fill="none" opacity="0.75"/>
<polygon points="736,620 736,596.2 752,593.6 764.7,592.4 777.5,593.6 791.5,596.2 803,600 815.8,600 822.2,593.6 826,583.4 822.2,573.2 824.7,569.4 835,569.4 847.7,566.8 860,564.3 868.9,561.3 901,566.5 925.1,561.3 937.1,580.2 941.2,595.4 961.2,603.5 983.3,615.5 993.3,611.5 1021.4,607.5 1050,607.5 1050,680 735,680 741.4,631.6" fill="#FBE2BA"/>
<polygon points="1002,605.3 1025.3,602.4 1050,608 1050,680 1000,680 1005,650 990,630" fill="#F6DDB8"/>
<polygon points="625,551 640,549 650,560 652,572 656,585 625,585" fill="#FAE3C6"/>
<polygon points="625,584 649,584 662,585.5 665,596.6 677.8,598.2 684,607.8 682.5,617.3 673,623.7 661.8,626.9 650.7,628.5 642.7,633.2 634.8,639.6 625,645" fill="#FDF1B5"/>
<polygon points="760,662 790,646 830,641 852,655 848,680 758,680" fill="#FDF0B3"/>
<polygon points="945,625 975,627 1002,638 1006,660 1000,680 935,680 940,650" fill="#FDF1B5"/>
<path d="M650,640 L645,604 M700,540 L720,600 M760,640 L820,600 L900,640 M860,600 L880,660 M700,600 L760,600" stroke="#D9C7A4" stroke-width="0.5" fill="none"/>
<polygon points="625,640 639.5,631.6 653.9,628.5 666.6,625.3 682.5,626.9 695.3,626.9 687.3,634.8 676.2,639.6 690.5,642.8 700,655.5 705,662 705,680 625,680" fill="#93C9EC"/>
<polygon points="655.5,637 664,634.8 676.2,637.5 672,645 660,646" fill="#F9CFBC"/>
<polygon points="739.8,634.8 757.3,630 770,631.6 782.8,641.2 773.3,646 765.3,655.5 762,661.9 762,680 739.8,680 738.2,647.5" fill="#93C9EC"/>
<ellipse cx="643" cy="502" rx="5" ry="8" transform="rotate(-20 643 502)" fill="#93C9EC"/><ellipse cx="645.5" cy="533" rx="1.8" ry="5.5" transform="rotate(15 645.5 533)" fill="#93C9EC"/><ellipse cx="685" cy="526" rx="2.6" ry="4.5" transform="rotate(-35 685 526)" fill="#93C9EC"/>
<ellipse cx="669" cy="494" rx="3.5" ry="6" transform="rotate(-30 669 494)" fill="#93C9EC"/>
<path d="M898,644 Q912,636 930,640" stroke="#93C9EC" stroke-width="3" fill="none"/>
<ellipse cx="1016" cy="630" rx="3" ry="3" fill="#93C9EC"/><path d="M744,553 Q748,565 751,576 M758,558 L765,559 M768.5,553 L785,555" stroke="#A9CFEA" stroke-width="1.2" fill="none"/>
<polyline points="679.8,637.7 693.7,638 706.4,628.5 716,618 720,611.5 725.5,599.8 732.8,588.5 745.5,578.3 764.7,573.2 778.8,570.7 790.3,563.6 809.4,559.8 822.2,560.4 847.7,557.9 860,559.8 901,559.3 921,559.3 961.2,561.3 977.3,561.3" stroke="#C9443A" stroke-width="0.9" fill="none"/>
<rect x="791.5" y="564.3" width="31.3" height="5.3" fill="#9E8E8A" opacity="0.9"/><rect x="794" y="566.3" width="26" height="1.2" fill="#E8E0DC"/>
<rect x="978.5" y="566.2" width="37" height="5.4" fill="#9E9490" opacity="0.9"/><rect x="981" y="568.2" width="32" height="1.2" fill="#E8E0DC"/>
<rect x="681" y="640.8" width="60.4" height="3.2" fill="#BDB3AD" opacity="0.9"/>
<circle cx="680" cy="635" r="2.4" fill="#C8302A"/>
<circle cx="977.3" cy="558" r="3" fill="#B83A30"/><circle cx="977.3" cy="560" r="2" fill="#3E8E4E"/>
<rect x="964.6" y="643.4" width="90" height="40" fill="#FFFFFF"/>
<g stroke="#DADADA" stroke-width="0.5"><line x1="966" y1="654.5" x2="1046" y2="654.5"/><line x1="966" y1="659.5" x2="1046" y2="659.5"/><line x1="966" y1="664.5" x2="1046" y2="664.5"/><line x1="984" y1="651" x2="984" y2="670"/></g>
<g fill="#B4B4B4"><rect x="969" y="647" width="12" height="1.6"/><rect x="969" y="652" width="9" height="1.2"/><rect x="969" y="657" width="8" height="1.2"/><rect x="969" y="662" width="10" height="1.2"/><rect x="986" y="652" width="6" height="1.2"/><rect x="986" y="657" width="11" height="1.2"/><rect x="986" y="662" width="7" height="1.2"/></g><rect x="966.5" y="646.5" width="2" height="2.2" fill="#7FA6D0"/>
<text x="813.9" y="624" font-family="Liberation Sans" font-size="10.8" fill="#7A7A7A" letter-spacing="2.2">Казахстан</text>
<text x="800" y="665" font-family="Liberation Sans" font-size="8" fill="#8A8A8A" letter-spacing="0.3">Узбекистан</text>
<text x="634" y="609.5" font-family="Liberation Sans" font-size="7.5" fill="#A09A90">Украина</text>
<text x="632" y="579" font-family="Liberation Sans" font-size="7.5" fill="#A09A90">усь</text>
<text x="655" y="498" font-family="Liberation Sans" font-size="7.5" fill="#E0B8B0">СТМ</text>
</g>
<path d="M1019,485.2 Q1045.6,485.2 1045.6,512 L1043.6,643 Q1043.3,669.6 1017,669.6 L660,659.8 Q633.2,659.6 633.1,634" stroke="#4A4A4A" stroke-width="1.2" fill="none" opacity="0.8"/>
</svg>
</div></body></html>
